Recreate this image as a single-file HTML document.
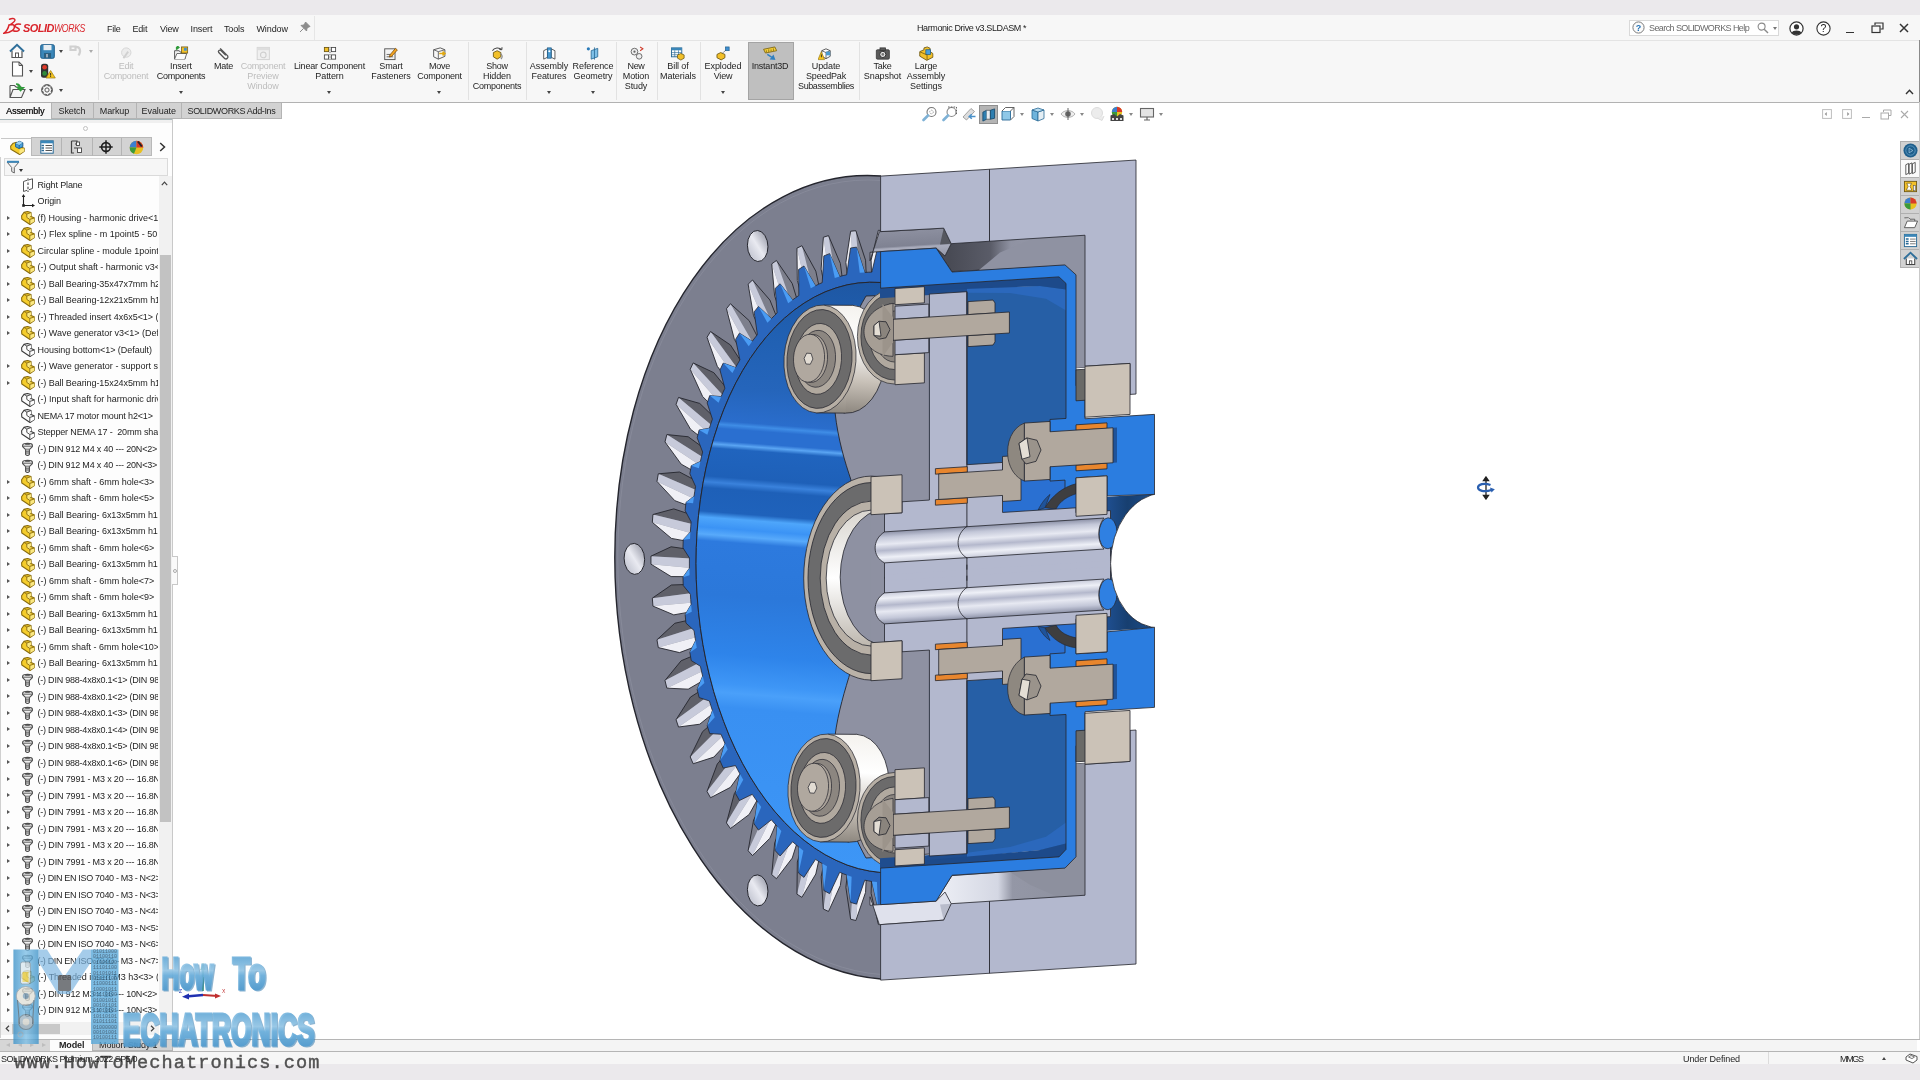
<!DOCTYPE html>
<html lang="en"><head><meta charset="utf-8"><title>Harmonic Drive v3.SLDASM - SOLIDWORKS</title>
<style>
html,body{margin:0;padding:0;width:1920px;height:1080px;overflow:hidden;background:#fff;}
body{font-family:"Liberation Sans",sans-serif;font-size:9px;color:#1e1e1e;position:relative}
.a{position:absolute}
.t{position:absolute;white-space:nowrap;line-height:11px}
.rb{position:absolute;top:46px;text-align:center;white-space:nowrap;line-height:9.9px;transform:translateX(-50%)}
.rb svg{display:block;margin:0 auto 1px auto}
.dis{color:#bdbdbd}
.dd{position:absolute;width:0;height:0;border-left:2.5px solid transparent;border-right:2.5px solid transparent;border-top:3px solid #444}
.sep{position:absolute;top:42px;height:58px;width:1px;background:#e2e2e2}
.tab{position:absolute;top:103px;height:15.5px;line-height:16.5px;text-align:center;background:#d2d2d2;border:1px solid #b4b4b4;border-top:none;box-sizing:border-box;font-size:9px}
.row{position:absolute;left:0;height:16px;width:158px;overflow:hidden;white-space:nowrap}
.row .tx{position:absolute;left:37.5px;top:3.3px;line-height:11px;white-space:pre}
.row svg{position:absolute;left:20.5px;top:1.5px}
.row i{position:absolute;left:7px;top:6.2px;width:0;height:0;border-top:2.5px solid transparent;border-bottom:2.5px solid transparent;border-left:3.5px solid #555}
</style></head>
<body>
<div id="app" style="position:absolute;left:0;top:0;width:1920px;height:1080px;overflow:hidden;will-change:transform">
<div class="a" style="left:0;top:0;width:1920px;height:15px;background:#ebe9ec"></div>
<div class="a" style="left:0;top:15px;width:1920px;height:87px;background:#f7f7f7"></div>
<div class="a" style="left:0;top:40px;width:1920px;height:1px;background:#e4e4e4"></div>
<div class="a" style="left:0;top:101.5px;width:1920px;height:1.3px;background:#b2b2b2"></div>
<div class="a" style="left:1918.6px;top:40px;width:1.2px;height:62px;background:#8a8a8a"></div>
<svg class="a" style="left:3px;top:17px" width="84" height="20" viewBox="0 0 84 20">
<path d="M6.5 2.2 C9 1.2 11.8 1.3 12 3 C12.2 4.6 9.5 6 8 7.2 M1 16.2 C3.5 14.5 5.2 11.5 6 8 L8.8 7.6 C12 7.6 12.3 11 9.5 13.4 C7 15.4 3.5 16.2 1 16.2 Z M17.5 7.2 C14.5 6.6 11.8 7.4 12 9 C12.3 10.8 16.3 10.8 16.3 12.6 C16.3 14.4 12.5 14.6 10.3 13.8" fill="none" stroke="#d9242b" stroke-width="1.5" stroke-linecap="round"/>
<text x="20" y="15" font-family="Liberation Sans,sans-serif" font-weight="bold" font-style="italic" font-size="11.5" fill="#d9242b" letter-spacing="-0.5" textLength="31" lengthAdjust="spacingAndGlyphs">SOLID</text>
<text x="51" y="15" font-family="Liberation Sans,sans-serif" font-style="italic" font-size="11.5" fill="#d9242b" letter-spacing="-0.5" textLength="31" lengthAdjust="spacingAndGlyphs">WORKS</text>
</svg>
<div class="t" style="left:107px;top:23.5px"><span style="letter-spacing:-0.21px">File</span></div>
<div class="t" style="left:132.5px;top:23.5px"><span style="letter-spacing:-0.21px">Edit</span></div>
<div class="t" style="left:160px;top:23.5px"><span style="letter-spacing:-0.21px">View</span></div>
<div class="t" style="left:190.5px;top:23.5px"><span style="letter-spacing:-0.12px">Insert</span></div>
<div class="t" style="left:224px;top:23.5px"><span style="letter-spacing:-0.15px">Tools</span></div>
<div class="t" style="left:256.5px;top:23.5px"><span style="letter-spacing:-0.12px">Window</span></div>
<svg class="a" style="left:299px;top:21px" width="12" height="12" viewBox="0 0 12 12"><path d="M6.5 1 L11 5.5 L9.5 6 L7.8 7.8 L7.6 10 L2 4.4 L4.2 4.2 L6 2.5 Z M4.6 7.4 L1 11" fill="#8c8c8c" stroke="#8c8c8c" stroke-width="1"/></svg>
<div class="a" style="left:314px;top:16px;width:1px;height:24px;background:#e6e6e6"></div>
<div class="t" style="left:917px;top:23px;font-size:9px;color:#222"><span style="letter-spacing:-0.40px">Harmonic Drive v3.SLDASM *</span></div>
<div class="a" style="left:1629px;top:19.5px;width:150px;height:16px;background:#fff;border:1px solid #d9d9d9;box-sizing:border-box"></div>
<svg class="a" style="left:1632px;top:21px" width="13" height="13" viewBox="0 0 13 13"><circle cx="6.5" cy="6.5" r="5.6" fill="#fafafa" stroke="#7a7a7a" stroke-width="1"/><text x="6.5" y="9.7" text-anchor="middle" font-family="Liberation Sans,sans-serif" font-weight="bold" font-size="9" fill="#1f6fb5">?</text></svg>
<div class="t" style="left:1649px;top:23px;font-size:9px;color:#6a6a6a"><span style="letter-spacing:-0.59px">Search SOLIDWORKS Help</span></div>
<svg class="a" style="left:1757px;top:22px" width="12" height="12" viewBox="0 0 12 12"><circle cx="4.6" cy="4.6" r="3.5" fill="none" stroke="#8a8a8a" stroke-width="1.1"/><path d="M7.2 7.2 L11 11" stroke="#8a8a8a" stroke-width="1.4"/></svg>
<div class="dd" style="left:1772.5px;top:27px;border-top-color:#777"></div>
<svg class="a" style="left:1788.5px;top:20.5px" width="15" height="15" viewBox="0 0 15 15"><circle cx="7.5" cy="7.5" r="6.6" fill="#fff" stroke="#333" stroke-width="1.2"/><circle cx="7.5" cy="5.8" r="2.6" fill="#333"/><path d="M2.8 11.8 C3.5 8.6 11.5 8.6 12.2 11.8 C10 14.3 5 14.3 2.8 11.8Z" fill="#333"/></svg>
<svg class="a" style="left:1815.5px;top:20.5px" width="15" height="15" viewBox="0 0 15 15"><circle cx="7.5" cy="7.5" r="6.6" fill="#fff" stroke="#333" stroke-width="1.1"/><text x="7.5" y="11.2" text-anchor="middle" font-family="Liberation Sans,sans-serif" font-size="10.5" fill="#222">?</text></svg>
<div class="a" style="left:1846px;top:31.5px;width:8px;height:1.6px;background:#333"></div>
<svg class="a" style="left:1871px;top:22px" width="13" height="12" viewBox="0 0 13 12"><path d="M4 3 V1 H12 V7 H9.5" fill="none" stroke="#333" stroke-width="1.2"/><rect x="1" y="4" width="8" height="6.5" fill="none" stroke="#333" stroke-width="1.2"/></svg>
<svg class="a" style="left:1899px;top:23px" width="10" height="10" viewBox="0 0 10 10"><path d="M1 1 L9 9 M9 1 L1 9" stroke="#333" stroke-width="1.5"/></svg>
<svg class="a" style="left:9px;top:43px" width="16" height="16" viewBox="0 0 16 16"><path d="M3 8 V14.5 H13 V8" fill="#fff" stroke="#555" stroke-width="1.2"/><path d="M1 8.5 L8 1.8 L15 8.5" fill="none" stroke="#2f6f9a" stroke-width="2"/><rect x="6.5" y="10" width="3" height="4.5" fill="none" stroke="#555" stroke-width="1"/></svg>
<svg class="a" style="left:39.5px;top:44px" width="15" height="15" viewBox="0 0 15 15"><rect x="0.7" y="0.7" width="13.6" height="13.6" rx="1.5" fill="#3a86b8" stroke="#1f5e8c" stroke-width="1"/><rect x="3.5" y="1" width="8" height="5.2" fill="#e8eef2"/><rect x="4" y="9" width="7" height="5" fill="#2c5f80"/><rect x="6" y="10" width="2" height="3.4" fill="#9ab"/></svg>
<div class="dd" style="left:59.0px;top:50px;border-top-color:#444"></div>
<svg class="a" style="left:69px;top:44px" width="14" height="13" viewBox="0 0 14 13"><path d="M1.5 2.5 H6.5 V6 H1.5 Z M6 3 C11 2 12.5 7 9.5 11.5" fill="none" stroke="#d0d0d0" stroke-width="2.2"/></svg>
<div class="dd" style="left:89.0px;top:50px;border-top-color:#aaa"></div>
<svg class="a" style="left:11px;top:61px" width="13" height="16" viewBox="0 0 13 16"><path d="M1.5 1 H8 L11.5 4.5 V15 H1.5 Z" fill="#fff" stroke="#555" stroke-width="1.1"/><path d="M8 1 V4.5 H11.5" fill="none" stroke="#555" stroke-width="1"/></svg>
<div class="dd" style="left:29.0px;top:69.5px;border-top-color:#444"></div>
<svg class="a" style="left:40px;top:63px" width="16" height="16" viewBox="0 0 16 16"><rect x="1" y="0.8" width="7.2" height="14" rx="2.5" fill="#333"/><circle cx="4.6" cy="4.3" r="2.3" fill="#e03a2a"/><circle cx="4.6" cy="10.4" r="2.3" fill="#2f8a3a"/><path d="M10.6 7.5 L15.3 15 H6 Z" fill="#f6c51f" stroke="#9a7a10" stroke-width="0.7"/><rect x="10.2" y="10" width="0.9" height="2.6" fill="#222"/><rect x="10.2" y="13.1" width="0.9" height="0.9" fill="#222"/></svg>
<svg class="a" style="left:9px;top:83px" width="17" height="16" viewBox="0 0 17 16"><path d="M1 2.5 H5.5 L7 4 H12 V6" fill="#fff" stroke="#555" stroke-width="1.1"/><path d="M1 2.5 V14.5 H12.5 L16 6.5 H4 L1 14.5" fill="#f4f4f4" stroke="#555" stroke-width="1.1"/><path d="M7 1 C10 1 11.5 3 11.5 6 M11.5 7.5 L8.8 4.8 H14.2 Z" fill="#2f9a3a" stroke="#2f9a3a" stroke-width="1.6"/></svg>
<div class="dd" style="left:29.0px;top:89px;border-top-color:#444"></div>
<svg class="a" style="left:40px;top:83px" width="14" height="14" viewBox="0 0 14 14"><circle cx="7" cy="7" r="4.6" fill="none" stroke="#555" stroke-width="1.1" stroke-dasharray="2.4 1.2"/><circle cx="7" cy="7" r="5.4" fill="none" stroke="#555" stroke-width="1"/><circle cx="7" cy="7" r="2.1" fill="none" stroke="#555" stroke-width="1"/></svg>
<div class="dd" style="left:59.0px;top:89px;border-top-color:#444"></div>
<div class="a" style="left:98px;top:42px;width:1px;height:58px;background:#e0e0e0"></div>
<div class="a" style="left:747.5px;top:42px;width:46px;height:58px;background:#bfbfbf;border:1px solid #a4a4a4;box-sizing:border-box"></div>
<div class="rb dis" style="left:126px"><svg width="15" height="15" viewBox="0 0 16 16"><circle cx="8" cy="7" r="5" fill="#ececec" stroke="#d4d4d4"/><path d="M5 13 L10 6" stroke="#d0d0d0" stroke-width="2"/></svg><span style="letter-spacing:-0.21px">Edit</span><br><span style="letter-spacing:-0.23px">Component</span></div>
<div class="rb" style="left:181px"><svg width="15" height="15" viewBox="0 0 16 16"><path d="M1 5 H6 L7 6.5 H12 V14 H1 Z" fill="#f1f1f1" stroke="#555" stroke-width="1"/><path d="M1 14 L3.5 8 H14 L12 14" fill="#fafafa" stroke="#555" stroke-width="0.9"/><rect x="8.5" y="1" width="6.5" height="6.5" fill="#f2c029" stroke="#6b5510" stroke-width="0.8"/><rect x="11" y="2" width="3" height="3" fill="#3f8fd0"/><path d="M3 4 V1.5 H5.5 M5.8 1.5 L4 0 V3 Z" fill="#2f9a3a" stroke="#2f9a3a" stroke-width="1.2"/></svg><span style="letter-spacing:-0.12px">Insert</span><br><span style="letter-spacing:-0.23px">Components</span></div>
<div class="dd" style="left:178.5px;top:91px;border-top-color:#444"></div>
<div class="rb" style="left:223.5px"><svg width="15" height="15" viewBox="0 0 16 16"><path d="M4 2.5 L12 10.5 A2.2 2.2 0 0 1 9 13.5 L2.5 7 A1.6 1.6 0 0 1 4.8 4.8 L10 10" fill="none" stroke="#555" stroke-width="1.4"/></svg><span style="letter-spacing:-0.21px">Mate</span></div>
<div class="rb dis" style="left:263px"><svg width="15" height="15" viewBox="0 0 16 16"><rect x="1.5" y="1.5" width="13" height="13" fill="#f0f0f0" stroke="#d2d2d2"/><rect x="1.5" y="1.5" width="13" height="3" fill="#dedede"/><circle cx="8" cy="9.5" r="3" fill="none" stroke="#d0d0d0" stroke-width="1.2"/></svg><span style="letter-spacing:-0.23px">Component</span><br><span style="letter-spacing:-0.10px">Preview</span><br><span style="letter-spacing:-0.12px">Window</span></div>
<div class="rb" style="left:329.5px"><svg width="15" height="15" viewBox="0 0 16 16"><rect x="2" y="1.5" width="4.5" height="4.5" fill="#f2c029" stroke="#6b5510" stroke-width="0.9"/><rect x="9.5" y="1.5" width="4.5" height="4.5" fill="#fff" stroke="#444" stroke-width="0.9"/><rect x="2" y="9.5" width="4.5" height="4.5" fill="#fff" stroke="#444" stroke-width="0.9"/><rect x="9.5" y="9.5" width="4.5" height="4.5" fill="#fff" stroke="#444" stroke-width="0.9"/><path d="M8 1 V15" stroke="#444" stroke-width="0.8" stroke-dasharray="1.5 1"/></svg><span style="letter-spacing:-0.19px">Linear Component</span><br><span style="letter-spacing:-0.10px">Pattern</span></div>
<div class="dd" style="left:327.0px;top:91px;border-top-color:#444"></div>
<div class="rb" style="left:391px"><svg width="15" height="15" viewBox="0 0 16 16"><rect x="1.5" y="3" width="11" height="11.5" fill="#f4f4f4" stroke="#555" stroke-width="1"/><path d="M3.5 11.5 H10.5 M3.5 9 H8" stroke="#555" stroke-width="0.9"/><path d="M7 9.5 L13 2.5 L15 4.2 L9 11 L6.5 11.8 Z" fill="#f5a623" stroke="#7a4a08" stroke-width="0.8"/></svg><span style="letter-spacing:-0.15px">Smart</span><br><span style="letter-spacing:-0.07px">Fasteners</span></div>
<div class="rb" style="left:439.5px"><svg width="15" height="15" viewBox="0 0 16 16"><path d="M2 4 L9 2 L14 4 V11 L7 14 L2 11.5 Z" fill="#f8f8f8" stroke="#555" stroke-width="1"/><path d="M2 4 L7 6 L14 4 M7 6 V14" fill="none" stroke="#555" stroke-width="0.9"/><path d="M8 8 H13 M11.5 6 L14 8 L11.5 10" fill="none" stroke="#e0a810" stroke-width="1.6"/></svg><span style="letter-spacing:-0.21px">Move</span><br><span style="letter-spacing:-0.23px">Component</span></div>
<div class="dd" style="left:437.0px;top:91px;border-top-color:#444"></div>
<div class="rb" style="left:497px"><svg width="15" height="15" viewBox="0 0 16 16"><path d="M4 7 L8 5 L12 7 V11.5 L8 14 L4 11.5 Z" fill="#f2c029" stroke="#6b5510" stroke-width="0.9"/><path d="M3 5 A6 5 0 0 1 13 4 M13 4 L13.2 1.4 M13 4 L10.4 3.6" fill="none" stroke="#444" stroke-width="1.1"/><path d="M11 8 C14 9 14 12 12 14" fill="none" stroke="#888" stroke-width="1.2"/></svg><span style="letter-spacing:-0.21px">Show</span><br><span style="letter-spacing:-0.12px">Hidden</span><br><span style="letter-spacing:-0.23px">Components</span></div>
<div class="rb" style="left:549px"><svg width="15" height="15" viewBox="0 0 16 16"><path d="M2 5 L6 3 V12 L2 14 Z M10 3 L14 5 V14 L10 12 Z" fill="#fff" stroke="#444" stroke-width="0.9"/><rect x="6" y="2" width="4" height="11" fill="#4a9ad0" stroke="#1f5e8c" stroke-width="0.8"/><circle cx="8" cy="5.5" r="1.1" fill="#fff"/></svg><span style="letter-spacing:-0.08px">Assembly</span><br><span style="letter-spacing:-0.08px">Features</span></div>
<div class="dd" style="left:546.5px;top:91px;border-top-color:#444"></div>
<div class="rb" style="left:593px"><svg width="15" height="15" viewBox="0 0 16 16"><path d="M6 5 L13 2.5 V11.5 L6 14 Z" fill="#7fc0e8" stroke="#2a6a96" stroke-width="0.9"/><path d="M9.5 1.5 V14.5" stroke="#2a6a96" stroke-width="0.9"/><circle cx="3" cy="3" r="1.7" fill="#2a7ab8"/></svg><span style="letter-spacing:-0.07px">Reference</span><br><span style="letter-spacing:-0.08px">Geometry</span></div>
<div class="dd" style="left:590.5px;top:91px;border-top-color:#444"></div>
<div class="rb" style="left:636px"><svg width="15" height="15" viewBox="0 0 16 16"><circle cx="6" cy="6" r="3.6" fill="#eee" stroke="#666" stroke-width="1"/><circle cx="6" cy="6" r="1.2" fill="#666"/><circle cx="11" cy="11" r="3" fill="#eee" stroke="#666" stroke-width="1"/><path d="M12 1 L15 3 L12 5" fill="none" stroke="#d04030" stroke-width="1.2"/></svg><span style="letter-spacing:-0.30px">New</span><br><span style="letter-spacing:-0.12px">Motion</span><br><span style="letter-spacing:-0.15px">Study</span></div>
<div class="rb" style="left:678px"><svg width="15" height="15" viewBox="0 0 16 16"><rect x="1.5" y="2" width="11" height="9.5" fill="#fff" stroke="#2a6a96" stroke-width="1"/><rect x="1.5" y="2" width="11" height="2.6" fill="#3a86b8"/><path d="M1.5 7 H12.5 M1.5 9.3 H12.5 M5 4.6 V11.5 M9 4.6 V11.5" stroke="#2a6a96" stroke-width="0.7"/><path d="M8 9.5 L11.5 8 L15 9.5 V13 L11.5 15 L8 13 Z" fill="#f2c029" stroke="#6b5510" stroke-width="0.8"/></svg><span style="letter-spacing:-0.10px">Bill of</span><br><span style="letter-spacing:-0.07px">Materials</span></div>
<div class="rb" style="left:723px"><svg width="15" height="15" viewBox="0 0 16 16"><path d="M1.5 9 L5.5 7 L10 9 V12.5 L6 14.8 L1.5 12.5 Z" fill="#f2c029" stroke="#6b5510" stroke-width="0.9"/><rect x="10.5" y="1" width="4" height="4" fill="#3f8fd0" stroke="#1f5e8c" stroke-width="0.7"/><path d="M7.5 7.5 L11 4.5" stroke="#444" stroke-width="0.9" stroke-dasharray="1.4 1"/></svg><span style="letter-spacing:-0.08px">Exploded</span><br><span style="letter-spacing:-0.21px">View</span></div>
<div class="dd" style="left:720.5px;top:91px;border-top-color:#444"></div>
<div class="rb" style="left:770px"><svg width="15" height="15" viewBox="0 0 16 16"><path d="M1 3.5 L13 1 L15 5 L3 7.5 Z" fill="#f5cf3a" stroke="#7a6310" stroke-width="0.9"/><path d="M4 6.8 V4.6 M6.5 6.3 V3.6 M9 5.8 V3.6 M11.5 5.3 V2.6" stroke="#7a6310" stroke-width="0.8"/><path d="M5 9 L12 13.5 M12.5 14 L9 13.8 L11.3 10.8 Z" fill="#2f7fc0" stroke="#2f7fc0" stroke-width="1.6"/></svg><span style="letter-spacing:-0.20px">Instant3D</span></div>
<div class="rb" style="left:826px"><svg width="15" height="15" viewBox="0 0 16 16"><path d="M4 5 L8.5 3 L13 5 V11 L8.5 13.5 L4 11 Z" fill="#fff" stroke="#444" stroke-width="0.9"/><path d="M4 5 L8.5 7 L13 5 M8.5 7 V13.5" fill="none" stroke="#444" stroke-width="0.8"/><rect x="8.5" y="6" width="4.5" height="4" fill="#4a9ad0"/><path d="M3.5 6 L7 14.5 H0 Z" fill="#f6c51f" stroke="#9a7a10" stroke-width="0.7"/><rect x="3.1" y="9" width="0.9" height="3" fill="#222"/></svg><span style="letter-spacing:-0.12px">Update</span><br><span style="letter-spacing:-0.21px">SpeedPak</span><br><span style="letter-spacing:-0.39px">Subassemblies</span></div>
<div class="rb" style="left:882.5px"><svg width="15" height="15" viewBox="0 0 16 16"><rect x="1" y="4" width="14" height="10" rx="1.2" fill="#5a5a5a" stroke="#333" stroke-width="0.8"/><rect x="5" y="2" width="6" height="2.6" fill="#5a5a5a" stroke="#333" stroke-width="0.8"/><circle cx="8" cy="9" r="3.3" fill="#e8e8e8" stroke="#222" stroke-width="1"/><circle cx="8" cy="9" r="1.5" fill="#777"/></svg><span style="letter-spacing:-0.21px">Take</span><br><span style="letter-spacing:-0.08px">Snapshot</span></div>
<div class="rb" style="left:926px"><svg width="15" height="15" viewBox="0 0 16 16"><path d="M1 6 L5.5 4 L5.5 2 L9 1 L12 2.4 V6 L15 8 V12 L8.5 15.3 L1 10.8 Z" fill="#f2c029" stroke="#6b5510" stroke-width="0.9"/><rect x="7.5" y="4" width="5" height="5" fill="#4aa0dc" stroke="#1f5e8c" stroke-width="0.8"/><path d="M1.3 6.3 L8.8 9.5 V15" fill="none" stroke="#6b5510" stroke-width="0.8"/></svg><span style="letter-spacing:-0.15px">Large</span><br><span style="letter-spacing:-0.08px">Assembly</span><br><span style="letter-spacing:-0.08px">Settings</span></div>
<div class="sep" style="left:467.5px"></div>
<div class="sep" style="left:526px"></div>
<div class="sep" style="left:616px"></div>
<div class="sep" style="left:656.5px"></div>
<div class="sep" style="left:700px"></div>
<div class="sep" style="left:859px"></div>
<svg class="a" style="left:1904.5px;top:89px" width="9" height="6" viewBox="0 0 9 6"><path d="M1 5 L4.5 1.3 L8 5" fill="none" stroke="#333" stroke-width="1.4"/></svg>
<div class="a" style="left:0;top:103px;width:51px;height:16px;background:#f7f7f7"></div>
<div class="t" style="left:6px;top:105.8px;font-size:9px;text-shadow:0.3px 0 0 #222"><span style="letter-spacing:-0.08px">Assembly</span></div>
<div class="tab" style="left:50.5px;width:43px"><span style="letter-spacing:-0.12px">Sketch</span></div>
<div class="tab" style="left:92.5px;width:44px"><span style="letter-spacing:-0.12px">Markup</span></div>
<div class="tab" style="left:135.5px;width:46.5px"><span style="letter-spacing:-0.08px">Evaluate</span></div>
<div class="tab" style="left:181px;width:101px"><span style="letter-spacing:-0.34px">SOLIDWORKS Add-Ins</span></div>
<div class="a" style="left:0;top:118.5px;width:172px;height:1.2px;background:#a9b7ba"></div>
<div class="a" style="left:0;top:119.5px;width:172px;height:919px;background:#fdfdfd"></div>
<div class="a" style="left:0;top:119.5px;width:172px;height:3px;background:#f0f0f0"></div>
<div class="a" style="left:171.5px;top:119px;width:1.2px;height:920px;background:#c9c9c9"></div>
<div class="a" style="left:0;top:157px;width:1.2px;height:881px;background:#d0d0d0"></div>
<div class="a" style="left:82.5px;top:126px;width:3px;height:3px;border:1px solid #c0c0c0;border-radius:50%"></div>
<div class="a" style="left:31px;top:137px;width:121px;height:19px;background:#d3d3d3;border:1px solid #b9b9b9;box-sizing:border-box"></div>
<div class="a" style="left:61px;top:138px;width:1px;height:18px;background:#b4b4b4"></div>
<div class="a" style="left:91.5px;top:138px;width:1px;height:18px;background:#b4b4b4"></div>
<div class="a" style="left:121px;top:138px;width:1px;height:18px;background:#b4b4b4"></div>
<div class="a" style="left:1px;top:137.5px;width:30px;height:1px;background:#c8c8c8"></div>
<svg class="a" style="left:9.5px;top:139.5px" width="15" height="15" viewBox="0 0 14 14"><path d="M0.6,5.8 L3,3 L6,2.2 L6,5 L13.3,7.6 L13.3,10.6 L9,13.5 L0.8,8.6 Z" fill="#f5cd2c" stroke="#8a6d10" stroke-width="1" stroke-linejoin="round"/><path d="M8.8,9 L13.3,7.6 L13.3,10.6 L8.8,13.3 Z" fill="#fbe880"/><path d="M5.2,3.2 L8.6,1.2 L12,2.6 L12,6.2 L8.6,8 L5.2,6.4 Z" fill="#4aa3de" stroke="#1f5e8c" stroke-width="0.9" stroke-linejoin="round"/><path d="M5.2,3.2 L8.6,4.6 L12,2.6 M8.6,4.6 V8" fill="none" stroke="#1f5e8c" stroke-width="0.8"/><path d="M5.2,3.2 L8.6,1.2 L12,2.6 L8.6,4.6 Z" fill="#9fd4f2"/></svg>
<svg class="a" style="left:39.5px;top:140px" width="14" height="14" viewBox="0 0 14 14"><rect x="0.8" y="0.8" width="12.4" height="12.4" fill="#fff" stroke="#2a6a96" stroke-width="1"/><rect x="0.8" y="0.8" width="12.4" height="2.5" fill="#3a86b8"/><path d="M1.5 5.5 H4 M1.5 8 H4 M1.5 10.5 H4" stroke="#2a6a96" stroke-width="1.6"/><path d="M5.5 5.5 H12 M5.5 8 H12 M5.5 10.5 H12" stroke="#555" stroke-width="1"/></svg>
<svg class="a" style="left:70px;top:140px" width="13" height="14" viewBox="0 0 13 14"><path d="M1.5 1 V13 H4 M1.5 1 H7 V4 H5 M4 8 H7" fill="none" stroke="#444" stroke-width="1.2"/><rect x="6.5" y="2" width="3" height="3.5" fill="#fff" stroke="#444" stroke-width="0.9"/><rect x="7.5" y="8" width="4" height="4.5" fill="#fff" stroke="#444" stroke-width="0.9"/></svg>
<svg class="a" style="left:99px;top:140px" width="14" height="14" viewBox="0 0 14 14"><circle cx="7" cy="7" r="4.4" fill="none" stroke="#1e1e1e" stroke-width="1.6"/><path d="M7 0.3 V13.7 M0.3 7 H13.7" stroke="#1e1e1e" stroke-width="1.5"/></svg>
<svg class="a" style="left:129px;top:139.5px" width="15" height="15" viewBox="0 0 15 15"><circle cx="7.5" cy="7.5" r="6.8" fill="#e8c020"/><path d="M7.5 7.5 L7.5 0.7 A6.8 6.8 0 0 0 0.7 7.5 Z" fill="#3a7fd0"/><path d="M7.5 7.5 L0.7 7.5 A6.8 6.8 0 0 0 5 13.8 Z" fill="#3a9a3a"/><path d="M7.5 7.5 L7.5 0.7 A6.8 6.8 0 0 1 14.3 7.5 Z" fill="#d83a2a"/><path d="M9 1.5 L12.8 6.5" stroke="#222" stroke-width="2"/></svg>
<svg class="a" style="left:158.5px;top:141.5px" width="7" height="10" viewBox="0 0 7 10"><path d="M1.2 1 L5.5 5 L1.2 9" fill="none" stroke="#333" stroke-width="1.5"/></svg>
<div class="a" style="left:4px;top:157.5px;width:164px;height:18.5px;background:#f6f6f6;border:1px solid #dadada;box-sizing:border-box"></div>
<svg class="a" style="left:5.5px;top:160px" width="14" height="14" viewBox="0 0 14 14"><path d="M1 2 H13 L8.3 7.5 V13 L5.7 11.5 V7.5 Z" fill="#f2f2f2" stroke="#666" stroke-width="1"/><path d="M1 1.8 H13" stroke="#3a86b8" stroke-width="2"/></svg>
<div class="dd" style="left:18.8px;top:168.5px;border-top-color:#333"></div>
<div class="row" style="top:176.40px"><svg width="14" height="14" viewBox="0 0 14 14" style=""><path d="M2.5 3.5 L6 2.3 M8 1.8 L11.5 0.8 L11.5 10.5 L8 11.7 M6 12.3 L2.5 13.5 L2.5 3.5" fill="none" stroke="#555" stroke-width="1"/><path d="M7 0.3 V2.8 M7 4.5 V7 M7 8.7 V11.2 M7 12.5 V14" stroke="#333" stroke-width="1"/></svg><span class="tx" style="letter-spacing:-0.14px">Right Plane</span></div>
<div class="row" style="top:192.91px"><svg width="14" height="14" viewBox="0 0 14 14" style=""><path d="M2.5 1 V11.5 H13" fill="none" stroke="#222" stroke-width="1.1"/><path d="M2.5 0 L0.8 3 H4.2 Z M14 11.5 L11 9.8 V13.2 Z" fill="#222"/><rect x="1.2" y="10.2" width="2.6" height="2.6" fill="#222"/></svg><span class="tx" style="letter-spacing:-0.12px">Origin</span></div>
<div class="row" style="top:209.42px"><i></i><svg width="14" height="14" viewBox="0 0 14 14" style=""><path d="M0.6,4.8 L3,1.4 L6.5,0.5 L10,1.6 L10.2,5.4 L13.3,7 L13.3,10.5 L9,13.5 L0.8,8 Z" fill="#f5cd2c" stroke="#8a6d10" stroke-width="1.1" stroke-linejoin="round"/><path d="M5.8,3 L10,1.6 L10.2,5.4 L8.8,8.4 L5.8,6.4 Z M8.8,8.4 L13.3,7 L13.3,10.5 L8.8,13.3 Z" fill="#fbe880"/><path d="M3,1.4 L5.8,3 L10,1.6 M5.8,3 L5.8,6.4 L8.8,8.4 L8.8,13.3 M8.8,8.4 L13.3,7 M10.2,5.4 L8.8,6" fill="none" stroke="#8a6d10" stroke-width="0.9" stroke-linejoin="round"/></svg><span class="tx" style="letter-spacing:-0.02px">(f) Housing - harmonic drive&lt;1&gt; (Default</span></div>
<div class="row" style="top:225.93px"><i></i><svg width="14" height="14" viewBox="0 0 14 14" style=""><path d="M0.6,4.8 L3,1.4 L6.5,0.5 L10,1.6 L10.2,5.4 L13.3,7 L13.3,10.5 L9,13.5 L0.8,8 Z" fill="#f5cd2c" stroke="#8a6d10" stroke-width="1.1" stroke-linejoin="round"/><path d="M5.8,3 L10,1.6 L10.2,5.4 L8.8,8.4 L5.8,6.4 Z M8.8,8.4 L13.3,7 L13.3,10.5 L8.8,13.3 Z" fill="#fbe880"/><path d="M3,1.4 L5.8,3 L10,1.6 M5.8,3 L5.8,6.4 L8.8,8.4 L8.8,13.3 M8.8,8.4 L13.3,7 M10.2,5.4 L8.8,6" fill="none" stroke="#8a6d10" stroke-width="0.9" stroke-linejoin="round"/></svg><span class="tx" style="letter-spacing:-0.01px">(-) Flex spline - m 1point5 - 50 teeth</span></div>
<div class="row" style="top:242.44px"><i></i><svg width="14" height="14" viewBox="0 0 14 14" style=""><path d="M0.6,4.8 L3,1.4 L6.5,0.5 L10,1.6 L10.2,5.4 L13.3,7 L13.3,10.5 L9,13.5 L0.8,8 Z" fill="#f5cd2c" stroke="#8a6d10" stroke-width="1.1" stroke-linejoin="round"/><path d="M5.8,3 L10,1.6 L10.2,5.4 L8.8,8.4 L5.8,6.4 Z M8.8,8.4 L13.3,7 L13.3,10.5 L8.8,13.3 Z" fill="#fbe880"/><path d="M3,1.4 L5.8,3 L10,1.6 M5.8,3 L5.8,6.4 L8.8,8.4 L8.8,13.3 M8.8,8.4 L13.3,7 M10.2,5.4 L8.8,6" fill="none" stroke="#8a6d10" stroke-width="0.9" stroke-linejoin="round"/></svg><span class="tx" style="letter-spacing:-0.01px">Circular spline - module 1point5</span></div>
<div class="row" style="top:258.95px"><i></i><svg width="14" height="14" viewBox="0 0 14 14" style=""><path d="M0.6,4.8 L3,1.4 L6.5,0.5 L10,1.6 L10.2,5.4 L13.3,7 L13.3,10.5 L9,13.5 L0.8,8 Z" fill="#f5cd2c" stroke="#8a6d10" stroke-width="1.1" stroke-linejoin="round"/><path d="M5.8,3 L10,1.6 L10.2,5.4 L8.8,8.4 L5.8,6.4 Z M8.8,8.4 L13.3,7 L13.3,10.5 L8.8,13.3 Z" fill="#fbe880"/><path d="M3,1.4 L5.8,3 L10,1.6 M5.8,3 L5.8,6.4 L8.8,8.4 L8.8,13.3 M8.8,8.4 L13.3,7 M10.2,5.4 L8.8,6" fill="none" stroke="#8a6d10" stroke-width="0.9" stroke-linejoin="round"/></svg><span class="tx" style="letter-spacing:-0.01px">(-) Output shaft - harmonic v3&lt;1&gt;</span></div>
<div class="row" style="top:275.46px"><i></i><svg width="14" height="14" viewBox="0 0 14 14" style=""><path d="M0.6,4.8 L3,1.4 L6.5,0.5 L10,1.6 L10.2,5.4 L13.3,7 L13.3,10.5 L9,13.5 L0.8,8 Z" fill="#f5cd2c" stroke="#8a6d10" stroke-width="1.1" stroke-linejoin="round"/><path d="M5.8,3 L10,1.6 L10.2,5.4 L8.8,8.4 L5.8,6.4 Z M8.8,8.4 L13.3,7 L13.3,10.5 L8.8,13.3 Z" fill="#fbe880"/><path d="M3,1.4 L5.8,3 L10,1.6 M5.8,3 L5.8,6.4 L8.8,8.4 L8.8,13.3 M8.8,8.4 L13.3,7 M10.2,5.4 L8.8,6" fill="none" stroke="#8a6d10" stroke-width="0.9" stroke-linejoin="round"/></svg><span class="tx" style="letter-spacing:-0.07px">(-) Ball Bearing-35x47x7mm h2&lt;1&gt;</span></div>
<div class="row" style="top:291.97px"><i></i><svg width="14" height="14" viewBox="0 0 14 14" style=""><path d="M0.6,4.8 L3,1.4 L6.5,0.5 L10,1.6 L10.2,5.4 L13.3,7 L13.3,10.5 L9,13.5 L0.8,8 Z" fill="#f5cd2c" stroke="#8a6d10" stroke-width="1.1" stroke-linejoin="round"/><path d="M5.8,3 L10,1.6 L10.2,5.4 L8.8,8.4 L5.8,6.4 Z M8.8,8.4 L13.3,7 L13.3,10.5 L8.8,13.3 Z" fill="#fbe880"/><path d="M3,1.4 L5.8,3 L10,1.6 M5.8,3 L5.8,6.4 L8.8,8.4 L8.8,13.3 M8.8,8.4 L13.3,7 M10.2,5.4 L8.8,6" fill="none" stroke="#8a6d10" stroke-width="0.9" stroke-linejoin="round"/></svg><span class="tx" style="letter-spacing:-0.07px">(-) Ball Bearing-12x21x5mm h1&lt;1&gt;</span></div>
<div class="row" style="top:308.48px"><i></i><svg width="14" height="14" viewBox="0 0 14 14" style=""><path d="M0.6,4.8 L3,1.4 L6.5,0.5 L10,1.6 L10.2,5.4 L13.3,7 L13.3,10.5 L9,13.5 L0.8,8 Z" fill="#f5cd2c" stroke="#8a6d10" stroke-width="1.1" stroke-linejoin="round"/><path d="M5.8,3 L10,1.6 L10.2,5.4 L8.8,8.4 L5.8,6.4 Z M8.8,8.4 L13.3,7 L13.3,10.5 L8.8,13.3 Z" fill="#fbe880"/><path d="M3,1.4 L5.8,3 L10,1.6 M5.8,3 L5.8,6.4 L8.8,8.4 L8.8,13.3 M8.8,8.4 L13.3,7 M10.2,5.4 L8.8,6" fill="none" stroke="#8a6d10" stroke-width="0.9" stroke-linejoin="round"/></svg><span class="tx" style="letter-spacing:-0.03px">(-) Threaded insert 4x6x5&lt;1&gt; (Default)</span></div>
<div class="row" style="top:324.99px"><i></i><svg width="14" height="14" viewBox="0 0 14 14" style=""><path d="M0.6,4.8 L3,1.4 L6.5,0.5 L10,1.6 L10.2,5.4 L13.3,7 L13.3,10.5 L9,13.5 L0.8,8 Z" fill="#f5cd2c" stroke="#8a6d10" stroke-width="1.1" stroke-linejoin="round"/><path d="M5.8,3 L10,1.6 L10.2,5.4 L8.8,8.4 L5.8,6.4 Z M8.8,8.4 L13.3,7 L13.3,10.5 L8.8,13.3 Z" fill="#fbe880"/><path d="M3,1.4 L5.8,3 L10,1.6 M5.8,3 L5.8,6.4 L8.8,8.4 L8.8,13.3 M8.8,8.4 L13.3,7 M10.2,5.4 L8.8,6" fill="none" stroke="#8a6d10" stroke-width="0.9" stroke-linejoin="round"/></svg><span class="tx" style="letter-spacing:-0.03px">(-) Wave generator v3&lt;1&gt; (Default)</span></div>
<div class="row" style="top:341.50px"><svg width="14" height="14" viewBox="0 0 14 14" style=""><path d="M0.6,4.8 L3,1.4 L6.5,0.5 L10,1.6 L10.2,5.4 L13.3,7 L13.3,10.5 L9,13.5 L0.8,8 Z" fill="#fcfcfc" stroke="#3c3c3c" stroke-width="1.1" stroke-linejoin="round"/><path d="M5.8,3 L10,1.6 L10.2,5.4 L8.8,8.4 L5.8,6.4 Z M8.8,8.4 L13.3,7 L13.3,10.5 L8.8,13.3 Z" fill="#ffffff"/><path d="M3,1.4 L5.8,3 L10,1.6 M5.8,3 L5.8,6.4 L8.8,8.4 L8.8,13.3 M8.8,8.4 L13.3,7 M10.2,5.4 L8.8,6" fill="none" stroke="#3c3c3c" stroke-width="0.9" stroke-linejoin="round"/></svg><span class="tx" style="letter-spacing:-0.04px">Housing bottom&lt;1&gt; (Default)</span></div>
<div class="row" style="top:358.01px"><i></i><svg width="14" height="14" viewBox="0 0 14 14" style=""><path d="M0.6,4.8 L3,1.4 L6.5,0.5 L10,1.6 L10.2,5.4 L13.3,7 L13.3,10.5 L9,13.5 L0.8,8 Z" fill="#f5cd2c" stroke="#8a6d10" stroke-width="1.1" stroke-linejoin="round"/><path d="M5.8,3 L10,1.6 L10.2,5.4 L8.8,8.4 L5.8,6.4 Z M8.8,8.4 L13.3,7 L13.3,10.5 L8.8,13.3 Z" fill="#fbe880"/><path d="M3,1.4 L5.8,3 L10,1.6 M5.8,3 L5.8,6.4 L8.8,8.4 L8.8,13.3 M8.8,8.4 L13.3,7 M10.2,5.4 L8.8,6" fill="none" stroke="#8a6d10" stroke-width="0.9" stroke-linejoin="round"/></svg><span class="tx" style="letter-spacing:0.01px">(-) Wave generator - support sleeve</span></div>
<div class="row" style="top:374.52px"><i></i><svg width="14" height="14" viewBox="0 0 14 14" style=""><path d="M0.6,4.8 L3,1.4 L6.5,0.5 L10,1.6 L10.2,5.4 L13.3,7 L13.3,10.5 L9,13.5 L0.8,8 Z" fill="#f5cd2c" stroke="#8a6d10" stroke-width="1.1" stroke-linejoin="round"/><path d="M5.8,3 L10,1.6 L10.2,5.4 L8.8,8.4 L5.8,6.4 Z M8.8,8.4 L13.3,7 L13.3,10.5 L8.8,13.3 Z" fill="#fbe880"/><path d="M3,1.4 L5.8,3 L10,1.6 M5.8,3 L5.8,6.4 L8.8,8.4 L8.8,13.3 M8.8,8.4 L13.3,7 M10.2,5.4 L8.8,6" fill="none" stroke="#8a6d10" stroke-width="0.9" stroke-linejoin="round"/></svg><span class="tx" style="letter-spacing:-0.07px">(-) Ball Bearing-15x24x5mm h1&lt;1&gt;</span></div>
<div class="row" style="top:391.03px"><svg width="14" height="14" viewBox="0 0 14 14" style=""><path d="M0.6,4.8 L3,1.4 L6.5,0.5 L10,1.6 L10.2,5.4 L13.3,7 L13.3,10.5 L9,13.5 L0.8,8 Z" fill="#fcfcfc" stroke="#3c3c3c" stroke-width="1.1" stroke-linejoin="round"/><path d="M5.8,3 L10,1.6 L10.2,5.4 L8.8,8.4 L5.8,6.4 Z M8.8,8.4 L13.3,7 L13.3,10.5 L8.8,13.3 Z" fill="#ffffff"/><path d="M3,1.4 L5.8,3 L10,1.6 M5.8,3 L5.8,6.4 L8.8,8.4 L8.8,13.3 M8.8,8.4 L13.3,7 M10.2,5.4 L8.8,6" fill="none" stroke="#3c3c3c" stroke-width="0.9" stroke-linejoin="round"/></svg><span class="tx" style="letter-spacing:0.01px">(-) Input shaft for harmonic drive</span></div>
<div class="row" style="top:407.54px"><svg width="14" height="14" viewBox="0 0 14 14" style=""><path d="M0.6,4.8 L3,1.4 L6.5,0.5 L10,1.6 L10.2,5.4 L13.3,7 L13.3,10.5 L9,13.5 L0.8,8 Z" fill="#fcfcfc" stroke="#3c3c3c" stroke-width="1.1" stroke-linejoin="round"/><path d="M5.8,3 L10,1.6 L10.2,5.4 L8.8,8.4 L5.8,6.4 Z M8.8,8.4 L13.3,7 L13.3,10.5 L8.8,13.3 Z" fill="#ffffff"/><path d="M3,1.4 L5.8,3 L10,1.6 M5.8,3 L5.8,6.4 L8.8,8.4 L8.8,13.3 M8.8,8.4 L13.3,7 M10.2,5.4 L8.8,6" fill="none" stroke="#3c3c3c" stroke-width="0.9" stroke-linejoin="round"/></svg><span class="tx" style="letter-spacing:-0.15px">NEMA 17 motor mount h2&lt;1&gt;</span></div>
<div class="row" style="top:424.05px"><svg width="14" height="14" viewBox="0 0 14 14" style=""><path d="M0.6,4.8 L3,1.4 L6.5,0.5 L10,1.6 L10.2,5.4 L13.3,7 L13.3,10.5 L9,13.5 L0.8,8 Z" fill="#fcfcfc" stroke="#3c3c3c" stroke-width="1.1" stroke-linejoin="round"/><path d="M5.8,3 L10,1.6 L10.2,5.4 L8.8,8.4 L5.8,6.4 Z M8.8,8.4 L13.3,7 L13.3,10.5 L8.8,13.3 Z" fill="#ffffff"/><path d="M3,1.4 L5.8,3 L10,1.6 M5.8,3 L5.8,6.4 L8.8,8.4 L8.8,13.3 M8.8,8.4 L13.3,7 M10.2,5.4 L8.8,6" fill="none" stroke="#3c3c3c" stroke-width="0.9" stroke-linejoin="round"/></svg><span class="tx" style="letter-spacing:-0.15px">Stepper NEMA 17 -  20mm shaft</span></div>
<div class="row" style="top:440.56px"><svg width="14" height="14" viewBox="0 0 14 14" style=""><path d="M1.6,3.2 C1.6,0.7 11.4,0.7 11.4,3.2 L11.4,4.6 L8.6,7.4 L4.4,7.4 L1.6,4.6 Z" fill="#f0f0f0" stroke="#4e4e4e" stroke-width="1.1" stroke-linejoin="round"/><path d="M2,4.2 H11 M4.2,2.4 H8.8" stroke="#4e4e4e" stroke-width="0.9"/><path d="M4.6,7.4 V12.6 L6.5,13.8 L8.4,12.6 V7.4" fill="#e2e2e2" stroke="#4e4e4e" stroke-width="1.1" stroke-linejoin="round"/><path d="M4.6,9.2 H8.4 M4.6,11 H8.4" stroke="#4e4e4e" stroke-width="0.9"/></svg><span class="tx" style="letter-spacing:-0.18px">(-) DIN 912 M4 x 40 --- 20N&lt;2&gt;</span></div>
<div class="row" style="top:457.07px"><svg width="14" height="14" viewBox="0 0 14 14" style=""><path d="M1.6,3.2 C1.6,0.7 11.4,0.7 11.4,3.2 L11.4,4.6 L8.6,7.4 L4.4,7.4 L1.6,4.6 Z" fill="#f0f0f0" stroke="#4e4e4e" stroke-width="1.1" stroke-linejoin="round"/><path d="M2,4.2 H11 M4.2,2.4 H8.8" stroke="#4e4e4e" stroke-width="0.9"/><path d="M4.6,7.4 V12.6 L6.5,13.8 L8.4,12.6 V7.4" fill="#e2e2e2" stroke="#4e4e4e" stroke-width="1.1" stroke-linejoin="round"/><path d="M4.6,9.2 H8.4 M4.6,11 H8.4" stroke="#4e4e4e" stroke-width="0.9"/></svg><span class="tx" style="letter-spacing:-0.18px">(-) DIN 912 M4 x 40 --- 20N&lt;3&gt;</span></div>
<div class="row" style="top:473.58px"><i></i><svg width="14" height="14" viewBox="0 0 14 14" style=""><path d="M0.6,4.8 L3,1.4 L6.5,0.5 L10,1.6 L10.2,5.4 L13.3,7 L13.3,10.5 L9,13.5 L0.8,8 Z" fill="#f5cd2c" stroke="#8a6d10" stroke-width="1.1" stroke-linejoin="round"/><path d="M5.8,3 L10,1.6 L10.2,5.4 L8.8,8.4 L5.8,6.4 Z M8.8,8.4 L13.3,7 L13.3,10.5 L8.8,13.3 Z" fill="#fbe880"/><path d="M3,1.4 L5.8,3 L10,1.6 M5.8,3 L5.8,6.4 L8.8,8.4 L8.8,13.3 M8.8,8.4 L13.3,7 M10.2,5.4 L8.8,6" fill="none" stroke="#8a6d10" stroke-width="0.9" stroke-linejoin="round"/></svg><span class="tx" style="letter-spacing:0.01px">(-) 6mm shaft - 6mm hole&lt;3&gt;</span></div>
<div class="row" style="top:490.09px"><i></i><svg width="14" height="14" viewBox="0 0 14 14" style=""><path d="M0.6,4.8 L3,1.4 L6.5,0.5 L10,1.6 L10.2,5.4 L13.3,7 L13.3,10.5 L9,13.5 L0.8,8 Z" fill="#f5cd2c" stroke="#8a6d10" stroke-width="1.1" stroke-linejoin="round"/><path d="M5.8,3 L10,1.6 L10.2,5.4 L8.8,8.4 L5.8,6.4 Z M8.8,8.4 L13.3,7 L13.3,10.5 L8.8,13.3 Z" fill="#fbe880"/><path d="M3,1.4 L5.8,3 L10,1.6 M5.8,3 L5.8,6.4 L8.8,8.4 L8.8,13.3 M8.8,8.4 L13.3,7 M10.2,5.4 L8.8,6" fill="none" stroke="#8a6d10" stroke-width="0.9" stroke-linejoin="round"/></svg><span class="tx" style="letter-spacing:0.01px">(-) 6mm shaft - 6mm hole&lt;5&gt;</span></div>
<div class="row" style="top:506.60px"><i></i><svg width="14" height="14" viewBox="0 0 14 14" style=""><path d="M0.6,4.8 L3,1.4 L6.5,0.5 L10,1.6 L10.2,5.4 L13.3,7 L13.3,10.5 L9,13.5 L0.8,8 Z" fill="#f5cd2c" stroke="#8a6d10" stroke-width="1.1" stroke-linejoin="round"/><path d="M5.8,3 L10,1.6 L10.2,5.4 L8.8,8.4 L5.8,6.4 Z M8.8,8.4 L13.3,7 L13.3,10.5 L8.8,13.3 Z" fill="#fbe880"/><path d="M3,1.4 L5.8,3 L10,1.6 M5.8,3 L5.8,6.4 L8.8,8.4 L8.8,13.3 M8.8,8.4 L13.3,7 M10.2,5.4 L8.8,6" fill="none" stroke="#8a6d10" stroke-width="0.9" stroke-linejoin="round"/></svg><span class="tx" style="letter-spacing:-0.06px">(-) Ball Bearing- 6x13x5mm h1&lt;1&gt;</span></div>
<div class="row" style="top:523.11px"><i></i><svg width="14" height="14" viewBox="0 0 14 14" style=""><path d="M0.6,4.8 L3,1.4 L6.5,0.5 L10,1.6 L10.2,5.4 L13.3,7 L13.3,10.5 L9,13.5 L0.8,8 Z" fill="#f5cd2c" stroke="#8a6d10" stroke-width="1.1" stroke-linejoin="round"/><path d="M5.8,3 L10,1.6 L10.2,5.4 L8.8,8.4 L5.8,6.4 Z M8.8,8.4 L13.3,7 L13.3,10.5 L8.8,13.3 Z" fill="#fbe880"/><path d="M3,1.4 L5.8,3 L10,1.6 M5.8,3 L5.8,6.4 L8.8,8.4 L8.8,13.3 M8.8,8.4 L13.3,7 M10.2,5.4 L8.8,6" fill="none" stroke="#8a6d10" stroke-width="0.9" stroke-linejoin="round"/></svg><span class="tx" style="letter-spacing:-0.06px">(-) Ball Bearing- 6x13x5mm h1&lt;2&gt;</span></div>
<div class="row" style="top:539.62px"><i></i><svg width="14" height="14" viewBox="0 0 14 14" style=""><path d="M0.6,4.8 L3,1.4 L6.5,0.5 L10,1.6 L10.2,5.4 L13.3,7 L13.3,10.5 L9,13.5 L0.8,8 Z" fill="#f5cd2c" stroke="#8a6d10" stroke-width="1.1" stroke-linejoin="round"/><path d="M5.8,3 L10,1.6 L10.2,5.4 L8.8,8.4 L5.8,6.4 Z M8.8,8.4 L13.3,7 L13.3,10.5 L8.8,13.3 Z" fill="#fbe880"/><path d="M3,1.4 L5.8,3 L10,1.6 M5.8,3 L5.8,6.4 L8.8,8.4 L8.8,13.3 M8.8,8.4 L13.3,7 M10.2,5.4 L8.8,6" fill="none" stroke="#8a6d10" stroke-width="0.9" stroke-linejoin="round"/></svg><span class="tx" style="letter-spacing:0.01px">(-) 6mm shaft - 6mm hole&lt;6&gt;</span></div>
<div class="row" style="top:556.13px"><i></i><svg width="14" height="14" viewBox="0 0 14 14" style=""><path d="M0.6,4.8 L3,1.4 L6.5,0.5 L10,1.6 L10.2,5.4 L13.3,7 L13.3,10.5 L9,13.5 L0.8,8 Z" fill="#f5cd2c" stroke="#8a6d10" stroke-width="1.1" stroke-linejoin="round"/><path d="M5.8,3 L10,1.6 L10.2,5.4 L8.8,8.4 L5.8,6.4 Z M8.8,8.4 L13.3,7 L13.3,10.5 L8.8,13.3 Z" fill="#fbe880"/><path d="M3,1.4 L5.8,3 L10,1.6 M5.8,3 L5.8,6.4 L8.8,8.4 L8.8,13.3 M8.8,8.4 L13.3,7 M10.2,5.4 L8.8,6" fill="none" stroke="#8a6d10" stroke-width="0.9" stroke-linejoin="round"/></svg><span class="tx" style="letter-spacing:-0.06px">(-) Ball Bearing- 6x13x5mm h1&lt;3&gt;</span></div>
<div class="row" style="top:572.64px"><i></i><svg width="14" height="14" viewBox="0 0 14 14" style=""><path d="M0.6,4.8 L3,1.4 L6.5,0.5 L10,1.6 L10.2,5.4 L13.3,7 L13.3,10.5 L9,13.5 L0.8,8 Z" fill="#f5cd2c" stroke="#8a6d10" stroke-width="1.1" stroke-linejoin="round"/><path d="M5.8,3 L10,1.6 L10.2,5.4 L8.8,8.4 L5.8,6.4 Z M8.8,8.4 L13.3,7 L13.3,10.5 L8.8,13.3 Z" fill="#fbe880"/><path d="M3,1.4 L5.8,3 L10,1.6 M5.8,3 L5.8,6.4 L8.8,8.4 L8.8,13.3 M8.8,8.4 L13.3,7 M10.2,5.4 L8.8,6" fill="none" stroke="#8a6d10" stroke-width="0.9" stroke-linejoin="round"/></svg><span class="tx" style="letter-spacing:0.01px">(-) 6mm shaft - 6mm hole&lt;7&gt;</span></div>
<div class="row" style="top:589.15px"><i></i><svg width="14" height="14" viewBox="0 0 14 14" style=""><path d="M0.6,4.8 L3,1.4 L6.5,0.5 L10,1.6 L10.2,5.4 L13.3,7 L13.3,10.5 L9,13.5 L0.8,8 Z" fill="#f5cd2c" stroke="#8a6d10" stroke-width="1.1" stroke-linejoin="round"/><path d="M5.8,3 L10,1.6 L10.2,5.4 L8.8,8.4 L5.8,6.4 Z M8.8,8.4 L13.3,7 L13.3,10.5 L8.8,13.3 Z" fill="#fbe880"/><path d="M3,1.4 L5.8,3 L10,1.6 M5.8,3 L5.8,6.4 L8.8,8.4 L8.8,13.3 M8.8,8.4 L13.3,7 M10.2,5.4 L8.8,6" fill="none" stroke="#8a6d10" stroke-width="0.9" stroke-linejoin="round"/></svg><span class="tx" style="letter-spacing:0.01px">(-) 6mm shaft - 6mm hole&lt;9&gt;</span></div>
<div class="row" style="top:605.66px"><i></i><svg width="14" height="14" viewBox="0 0 14 14" style=""><path d="M0.6,4.8 L3,1.4 L6.5,0.5 L10,1.6 L10.2,5.4 L13.3,7 L13.3,10.5 L9,13.5 L0.8,8 Z" fill="#f5cd2c" stroke="#8a6d10" stroke-width="1.1" stroke-linejoin="round"/><path d="M5.8,3 L10,1.6 L10.2,5.4 L8.8,8.4 L5.8,6.4 Z M8.8,8.4 L13.3,7 L13.3,10.5 L8.8,13.3 Z" fill="#fbe880"/><path d="M3,1.4 L5.8,3 L10,1.6 M5.8,3 L5.8,6.4 L8.8,8.4 L8.8,13.3 M8.8,8.4 L13.3,7 M10.2,5.4 L8.8,6" fill="none" stroke="#8a6d10" stroke-width="0.9" stroke-linejoin="round"/></svg><span class="tx" style="letter-spacing:-0.06px">(-) Ball Bearing- 6x13x5mm h1&lt;4&gt;</span></div>
<div class="row" style="top:622.17px"><i></i><svg width="14" height="14" viewBox="0 0 14 14" style=""><path d="M0.6,4.8 L3,1.4 L6.5,0.5 L10,1.6 L10.2,5.4 L13.3,7 L13.3,10.5 L9,13.5 L0.8,8 Z" fill="#f5cd2c" stroke="#8a6d10" stroke-width="1.1" stroke-linejoin="round"/><path d="M5.8,3 L10,1.6 L10.2,5.4 L8.8,8.4 L5.8,6.4 Z M8.8,8.4 L13.3,7 L13.3,10.5 L8.8,13.3 Z" fill="#fbe880"/><path d="M3,1.4 L5.8,3 L10,1.6 M5.8,3 L5.8,6.4 L8.8,8.4 L8.8,13.3 M8.8,8.4 L13.3,7 M10.2,5.4 L8.8,6" fill="none" stroke="#8a6d10" stroke-width="0.9" stroke-linejoin="round"/></svg><span class="tx" style="letter-spacing:-0.06px">(-) Ball Bearing- 6x13x5mm h1&lt;5&gt;</span></div>
<div class="row" style="top:638.68px"><i></i><svg width="14" height="14" viewBox="0 0 14 14" style=""><path d="M0.6,4.8 L3,1.4 L6.5,0.5 L10,1.6 L10.2,5.4 L13.3,7 L13.3,10.5 L9,13.5 L0.8,8 Z" fill="#f5cd2c" stroke="#8a6d10" stroke-width="1.1" stroke-linejoin="round"/><path d="M5.8,3 L10,1.6 L10.2,5.4 L8.8,8.4 L5.8,6.4 Z M8.8,8.4 L13.3,7 L13.3,10.5 L8.8,13.3 Z" fill="#fbe880"/><path d="M3,1.4 L5.8,3 L10,1.6 M5.8,3 L5.8,6.4 L8.8,8.4 L8.8,13.3 M8.8,8.4 L13.3,7 M10.2,5.4 L8.8,6" fill="none" stroke="#8a6d10" stroke-width="0.9" stroke-linejoin="round"/></svg><span class="tx" style="letter-spacing:0.00px">(-) 6mm shaft - 6mm hole&lt;10&gt;</span></div>
<div class="row" style="top:655.19px"><i></i><svg width="14" height="14" viewBox="0 0 14 14" style=""><path d="M0.6,4.8 L3,1.4 L6.5,0.5 L10,1.6 L10.2,5.4 L13.3,7 L13.3,10.5 L9,13.5 L0.8,8 Z" fill="#f5cd2c" stroke="#8a6d10" stroke-width="1.1" stroke-linejoin="round"/><path d="M5.8,3 L10,1.6 L10.2,5.4 L8.8,8.4 L5.8,6.4 Z M8.8,8.4 L13.3,7 L13.3,10.5 L8.8,13.3 Z" fill="#fbe880"/><path d="M3,1.4 L5.8,3 L10,1.6 M5.8,3 L5.8,6.4 L8.8,8.4 L8.8,13.3 M8.8,8.4 L13.3,7 M10.2,5.4 L8.8,6" fill="none" stroke="#8a6d10" stroke-width="0.9" stroke-linejoin="round"/></svg><span class="tx" style="letter-spacing:-0.06px">(-) Ball Bearing- 6x13x5mm h1&lt;6&gt;</span></div>
<div class="row" style="top:671.70px"><i></i><svg width="14" height="14" viewBox="0 0 14 14" style=""><path d="M1.6,3.2 C1.6,0.7 11.4,0.7 11.4,3.2 L11.4,4.6 L8.6,7.4 L4.4,7.4 L1.6,4.6 Z" fill="#f0f0f0" stroke="#4e4e4e" stroke-width="1.1" stroke-linejoin="round"/><path d="M2,4.2 H11 M4.2,2.4 H8.8" stroke="#4e4e4e" stroke-width="0.9"/><path d="M4.6,7.4 V12.6 L6.5,13.8 L8.4,12.6 V7.4" fill="#e2e2e2" stroke="#4e4e4e" stroke-width="1.1" stroke-linejoin="round"/><path d="M4.6,9.2 H8.4 M4.6,11 H8.4" stroke="#4e4e4e" stroke-width="0.9"/></svg><span class="tx" style="letter-spacing:-0.22px">(-) DIN 988-4x8x0.1&lt;1&gt; (DIN 988</span></div>
<div class="row" style="top:688.21px"><i></i><svg width="14" height="14" viewBox="0 0 14 14" style=""><path d="M1.6,3.2 C1.6,0.7 11.4,0.7 11.4,3.2 L11.4,4.6 L8.6,7.4 L4.4,7.4 L1.6,4.6 Z" fill="#f0f0f0" stroke="#4e4e4e" stroke-width="1.1" stroke-linejoin="round"/><path d="M2,4.2 H11 M4.2,2.4 H8.8" stroke="#4e4e4e" stroke-width="0.9"/><path d="M4.6,7.4 V12.6 L6.5,13.8 L8.4,12.6 V7.4" fill="#e2e2e2" stroke="#4e4e4e" stroke-width="1.1" stroke-linejoin="round"/><path d="M4.6,9.2 H8.4 M4.6,11 H8.4" stroke="#4e4e4e" stroke-width="0.9"/></svg><span class="tx" style="letter-spacing:-0.22px">(-) DIN 988-4x8x0.1&lt;2&gt; (DIN 988</span></div>
<div class="row" style="top:704.72px"><i></i><svg width="14" height="14" viewBox="0 0 14 14" style=""><path d="M1.6,3.2 C1.6,0.7 11.4,0.7 11.4,3.2 L11.4,4.6 L8.6,7.4 L4.4,7.4 L1.6,4.6 Z" fill="#f0f0f0" stroke="#4e4e4e" stroke-width="1.1" stroke-linejoin="round"/><path d="M2,4.2 H11 M4.2,2.4 H8.8" stroke="#4e4e4e" stroke-width="0.9"/><path d="M4.6,7.4 V12.6 L6.5,13.8 L8.4,12.6 V7.4" fill="#e2e2e2" stroke="#4e4e4e" stroke-width="1.1" stroke-linejoin="round"/><path d="M4.6,9.2 H8.4 M4.6,11 H8.4" stroke="#4e4e4e" stroke-width="0.9"/></svg><span class="tx" style="letter-spacing:-0.22px">(-) DIN 988-4x8x0.1&lt;3&gt; (DIN 988</span></div>
<div class="row" style="top:721.23px"><i></i><svg width="14" height="14" viewBox="0 0 14 14" style=""><path d="M1.6,3.2 C1.6,0.7 11.4,0.7 11.4,3.2 L11.4,4.6 L8.6,7.4 L4.4,7.4 L1.6,4.6 Z" fill="#f0f0f0" stroke="#4e4e4e" stroke-width="1.1" stroke-linejoin="round"/><path d="M2,4.2 H11 M4.2,2.4 H8.8" stroke="#4e4e4e" stroke-width="0.9"/><path d="M4.6,7.4 V12.6 L6.5,13.8 L8.4,12.6 V7.4" fill="#e2e2e2" stroke="#4e4e4e" stroke-width="1.1" stroke-linejoin="round"/><path d="M4.6,9.2 H8.4 M4.6,11 H8.4" stroke="#4e4e4e" stroke-width="0.9"/></svg><span class="tx" style="letter-spacing:-0.22px">(-) DIN 988-4x8x0.1&lt;4&gt; (DIN 988</span></div>
<div class="row" style="top:737.74px"><i></i><svg width="14" height="14" viewBox="0 0 14 14" style=""><path d="M1.6,3.2 C1.6,0.7 11.4,0.7 11.4,3.2 L11.4,4.6 L8.6,7.4 L4.4,7.4 L1.6,4.6 Z" fill="#f0f0f0" stroke="#4e4e4e" stroke-width="1.1" stroke-linejoin="round"/><path d="M2,4.2 H11 M4.2,2.4 H8.8" stroke="#4e4e4e" stroke-width="0.9"/><path d="M4.6,7.4 V12.6 L6.5,13.8 L8.4,12.6 V7.4" fill="#e2e2e2" stroke="#4e4e4e" stroke-width="1.1" stroke-linejoin="round"/><path d="M4.6,9.2 H8.4 M4.6,11 H8.4" stroke="#4e4e4e" stroke-width="0.9"/></svg><span class="tx" style="letter-spacing:-0.22px">(-) DIN 988-4x8x0.1&lt;5&gt; (DIN 988</span></div>
<div class="row" style="top:754.25px"><i></i><svg width="14" height="14" viewBox="0 0 14 14" style=""><path d="M1.6,3.2 C1.6,0.7 11.4,0.7 11.4,3.2 L11.4,4.6 L8.6,7.4 L4.4,7.4 L1.6,4.6 Z" fill="#f0f0f0" stroke="#4e4e4e" stroke-width="1.1" stroke-linejoin="round"/><path d="M2,4.2 H11 M4.2,2.4 H8.8" stroke="#4e4e4e" stroke-width="0.9"/><path d="M4.6,7.4 V12.6 L6.5,13.8 L8.4,12.6 V7.4" fill="#e2e2e2" stroke="#4e4e4e" stroke-width="1.1" stroke-linejoin="round"/><path d="M4.6,9.2 H8.4 M4.6,11 H8.4" stroke="#4e4e4e" stroke-width="0.9"/></svg><span class="tx" style="letter-spacing:-0.22px">(-) DIN 988-4x8x0.1&lt;6&gt; (DIN 988</span></div>
<div class="row" style="top:770.76px"><i></i><svg width="14" height="14" viewBox="0 0 14 14" style=""><path d="M1.6,3.2 C1.6,0.7 11.4,0.7 11.4,3.2 L11.4,4.6 L8.6,7.4 L4.4,7.4 L1.6,4.6 Z" fill="#f0f0f0" stroke="#4e4e4e" stroke-width="1.1" stroke-linejoin="round"/><path d="M2,4.2 H11 M4.2,2.4 H8.8" stroke="#4e4e4e" stroke-width="0.9"/><path d="M4.6,7.4 V12.6 L6.5,13.8 L8.4,12.6 V7.4" fill="#e2e2e2" stroke="#4e4e4e" stroke-width="1.1" stroke-linejoin="round"/><path d="M4.6,9.2 H8.4 M4.6,11 H8.4" stroke="#4e4e4e" stroke-width="0.9"/></svg><span class="tx" style="letter-spacing:-0.16px">(-) DIN 7991 - M3 x 20 --- 16.8N&lt;1&gt;</span></div>
<div class="row" style="top:787.27px"><i></i><svg width="14" height="14" viewBox="0 0 14 14" style=""><path d="M1.6,3.2 C1.6,0.7 11.4,0.7 11.4,3.2 L11.4,4.6 L8.6,7.4 L4.4,7.4 L1.6,4.6 Z" fill="#f0f0f0" stroke="#4e4e4e" stroke-width="1.1" stroke-linejoin="round"/><path d="M2,4.2 H11 M4.2,2.4 H8.8" stroke="#4e4e4e" stroke-width="0.9"/><path d="M4.6,7.4 V12.6 L6.5,13.8 L8.4,12.6 V7.4" fill="#e2e2e2" stroke="#4e4e4e" stroke-width="1.1" stroke-linejoin="round"/><path d="M4.6,9.2 H8.4 M4.6,11 H8.4" stroke="#4e4e4e" stroke-width="0.9"/></svg><span class="tx" style="letter-spacing:-0.16px">(-) DIN 7991 - M3 x 20 --- 16.8N&lt;2&gt;</span></div>
<div class="row" style="top:803.78px"><i></i><svg width="14" height="14" viewBox="0 0 14 14" style=""><path d="M1.6,3.2 C1.6,0.7 11.4,0.7 11.4,3.2 L11.4,4.6 L8.6,7.4 L4.4,7.4 L1.6,4.6 Z" fill="#f0f0f0" stroke="#4e4e4e" stroke-width="1.1" stroke-linejoin="round"/><path d="M2,4.2 H11 M4.2,2.4 H8.8" stroke="#4e4e4e" stroke-width="0.9"/><path d="M4.6,7.4 V12.6 L6.5,13.8 L8.4,12.6 V7.4" fill="#e2e2e2" stroke="#4e4e4e" stroke-width="1.1" stroke-linejoin="round"/><path d="M4.6,9.2 H8.4 M4.6,11 H8.4" stroke="#4e4e4e" stroke-width="0.9"/></svg><span class="tx" style="letter-spacing:-0.16px">(-) DIN 7991 - M3 x 20 --- 16.8N&lt;3&gt;</span></div>
<div class="row" style="top:820.29px"><i></i><svg width="14" height="14" viewBox="0 0 14 14" style=""><path d="M1.6,3.2 C1.6,0.7 11.4,0.7 11.4,3.2 L11.4,4.6 L8.6,7.4 L4.4,7.4 L1.6,4.6 Z" fill="#f0f0f0" stroke="#4e4e4e" stroke-width="1.1" stroke-linejoin="round"/><path d="M2,4.2 H11 M4.2,2.4 H8.8" stroke="#4e4e4e" stroke-width="0.9"/><path d="M4.6,7.4 V12.6 L6.5,13.8 L8.4,12.6 V7.4" fill="#e2e2e2" stroke="#4e4e4e" stroke-width="1.1" stroke-linejoin="round"/><path d="M4.6,9.2 H8.4 M4.6,11 H8.4" stroke="#4e4e4e" stroke-width="0.9"/></svg><span class="tx" style="letter-spacing:-0.16px">(-) DIN 7991 - M3 x 20 --- 16.8N&lt;4&gt;</span></div>
<div class="row" style="top:836.80px"><i></i><svg width="14" height="14" viewBox="0 0 14 14" style=""><path d="M1.6,3.2 C1.6,0.7 11.4,0.7 11.4,3.2 L11.4,4.6 L8.6,7.4 L4.4,7.4 L1.6,4.6 Z" fill="#f0f0f0" stroke="#4e4e4e" stroke-width="1.1" stroke-linejoin="round"/><path d="M2,4.2 H11 M4.2,2.4 H8.8" stroke="#4e4e4e" stroke-width="0.9"/><path d="M4.6,7.4 V12.6 L6.5,13.8 L8.4,12.6 V7.4" fill="#e2e2e2" stroke="#4e4e4e" stroke-width="1.1" stroke-linejoin="round"/><path d="M4.6,9.2 H8.4 M4.6,11 H8.4" stroke="#4e4e4e" stroke-width="0.9"/></svg><span class="tx" style="letter-spacing:-0.16px">(-) DIN 7991 - M3 x 20 --- 16.8N&lt;5&gt;</span></div>
<div class="row" style="top:853.31px"><i></i><svg width="14" height="14" viewBox="0 0 14 14" style=""><path d="M1.6,3.2 C1.6,0.7 11.4,0.7 11.4,3.2 L11.4,4.6 L8.6,7.4 L4.4,7.4 L1.6,4.6 Z" fill="#f0f0f0" stroke="#4e4e4e" stroke-width="1.1" stroke-linejoin="round"/><path d="M2,4.2 H11 M4.2,2.4 H8.8" stroke="#4e4e4e" stroke-width="0.9"/><path d="M4.6,7.4 V12.6 L6.5,13.8 L8.4,12.6 V7.4" fill="#e2e2e2" stroke="#4e4e4e" stroke-width="1.1" stroke-linejoin="round"/><path d="M4.6,9.2 H8.4 M4.6,11 H8.4" stroke="#4e4e4e" stroke-width="0.9"/></svg><span class="tx" style="letter-spacing:-0.16px">(-) DIN 7991 - M3 x 20 --- 16.8N&lt;6&gt;</span></div>
<div class="row" style="top:869.82px"><i></i><svg width="14" height="14" viewBox="0 0 14 14" style=""><path d="M1.6,3.2 C1.6,0.7 11.4,0.7 11.4,3.2 L11.4,4.6 L8.6,7.4 L4.4,7.4 L1.6,4.6 Z" fill="#f0f0f0" stroke="#4e4e4e" stroke-width="1.1" stroke-linejoin="round"/><path d="M2,4.2 H11 M4.2,2.4 H8.8" stroke="#4e4e4e" stroke-width="0.9"/><path d="M4.6,7.4 V12.6 L6.5,13.8 L8.4,12.6 V7.4" fill="#e2e2e2" stroke="#4e4e4e" stroke-width="1.1" stroke-linejoin="round"/><path d="M4.6,9.2 H8.4 M4.6,11 H8.4" stroke="#4e4e4e" stroke-width="0.9"/></svg><span class="tx" style="letter-spacing:-0.33px">(-) DIN EN ISO 7040 - M3 - N&lt;2&gt;</span></div>
<div class="row" style="top:886.33px"><i></i><svg width="14" height="14" viewBox="0 0 14 14" style=""><path d="M1.6,3.2 C1.6,0.7 11.4,0.7 11.4,3.2 L11.4,4.6 L8.6,7.4 L4.4,7.4 L1.6,4.6 Z" fill="#f0f0f0" stroke="#4e4e4e" stroke-width="1.1" stroke-linejoin="round"/><path d="M2,4.2 H11 M4.2,2.4 H8.8" stroke="#4e4e4e" stroke-width="0.9"/><path d="M4.6,7.4 V12.6 L6.5,13.8 L8.4,12.6 V7.4" fill="#e2e2e2" stroke="#4e4e4e" stroke-width="1.1" stroke-linejoin="round"/><path d="M4.6,9.2 H8.4 M4.6,11 H8.4" stroke="#4e4e4e" stroke-width="0.9"/></svg><span class="tx" style="letter-spacing:-0.33px">(-) DIN EN ISO 7040 - M3 - N&lt;3&gt;</span></div>
<div class="row" style="top:902.84px"><i></i><svg width="14" height="14" viewBox="0 0 14 14" style=""><path d="M1.6,3.2 C1.6,0.7 11.4,0.7 11.4,3.2 L11.4,4.6 L8.6,7.4 L4.4,7.4 L1.6,4.6 Z" fill="#f0f0f0" stroke="#4e4e4e" stroke-width="1.1" stroke-linejoin="round"/><path d="M2,4.2 H11 M4.2,2.4 H8.8" stroke="#4e4e4e" stroke-width="0.9"/><path d="M4.6,7.4 V12.6 L6.5,13.8 L8.4,12.6 V7.4" fill="#e2e2e2" stroke="#4e4e4e" stroke-width="1.1" stroke-linejoin="round"/><path d="M4.6,9.2 H8.4 M4.6,11 H8.4" stroke="#4e4e4e" stroke-width="0.9"/></svg><span class="tx" style="letter-spacing:-0.33px">(-) DIN EN ISO 7040 - M3 - N&lt;4&gt;</span></div>
<div class="row" style="top:919.35px"><i></i><svg width="14" height="14" viewBox="0 0 14 14" style=""><path d="M1.6,3.2 C1.6,0.7 11.4,0.7 11.4,3.2 L11.4,4.6 L8.6,7.4 L4.4,7.4 L1.6,4.6 Z" fill="#f0f0f0" stroke="#4e4e4e" stroke-width="1.1" stroke-linejoin="round"/><path d="M2,4.2 H11 M4.2,2.4 H8.8" stroke="#4e4e4e" stroke-width="0.9"/><path d="M4.6,7.4 V12.6 L6.5,13.8 L8.4,12.6 V7.4" fill="#e2e2e2" stroke="#4e4e4e" stroke-width="1.1" stroke-linejoin="round"/><path d="M4.6,9.2 H8.4 M4.6,11 H8.4" stroke="#4e4e4e" stroke-width="0.9"/></svg><span class="tx" style="letter-spacing:-0.33px">(-) DIN EN ISO 7040 - M3 - N&lt;5&gt;</span></div>
<div class="row" style="top:935.86px"><i></i><svg width="14" height="14" viewBox="0 0 14 14" style=""><path d="M1.6,3.2 C1.6,0.7 11.4,0.7 11.4,3.2 L11.4,4.6 L8.6,7.4 L4.4,7.4 L1.6,4.6 Z" fill="#f0f0f0" stroke="#4e4e4e" stroke-width="1.1" stroke-linejoin="round"/><path d="M2,4.2 H11 M4.2,2.4 H8.8" stroke="#4e4e4e" stroke-width="0.9"/><path d="M4.6,7.4 V12.6 L6.5,13.8 L8.4,12.6 V7.4" fill="#e2e2e2" stroke="#4e4e4e" stroke-width="1.1" stroke-linejoin="round"/><path d="M4.6,9.2 H8.4 M4.6,11 H8.4" stroke="#4e4e4e" stroke-width="0.9"/></svg><span class="tx" style="letter-spacing:-0.33px">(-) DIN EN ISO 7040 - M3 - N&lt;6&gt;</span></div>
<div class="row" style="top:952.37px"><i></i><svg width="14" height="14" viewBox="0 0 14 14" style=""><path d="M1.6,3.2 C1.6,0.7 11.4,0.7 11.4,3.2 L11.4,4.6 L8.6,7.4 L4.4,7.4 L1.6,4.6 Z" fill="#f0f0f0" stroke="#4e4e4e" stroke-width="1.1" stroke-linejoin="round"/><path d="M2,4.2 H11 M4.2,2.4 H8.8" stroke="#4e4e4e" stroke-width="0.9"/><path d="M4.6,7.4 V12.6 L6.5,13.8 L8.4,12.6 V7.4" fill="#e2e2e2" stroke="#4e4e4e" stroke-width="1.1" stroke-linejoin="round"/><path d="M4.6,9.2 H8.4 M4.6,11 H8.4" stroke="#4e4e4e" stroke-width="0.9"/></svg><span class="tx" style="letter-spacing:-0.33px">(-) DIN EN ISO 7040 - M3 - N&lt;7&gt;</span></div>
<div class="row" style="top:968.88px"><i></i><svg width="14" height="14" viewBox="0 0 14 14" style=""><path d="M0.6,4.8 L3,1.4 L6.5,0.5 L10,1.6 L10.2,5.4 L13.3,7 L13.3,10.5 L9,13.5 L0.8,8 Z" fill="#f5cd2c" stroke="#8a6d10" stroke-width="1.1" stroke-linejoin="round"/><path d="M5.8,3 L10,1.6 L10.2,5.4 L8.8,8.4 L5.8,6.4 Z M8.8,8.4 L13.3,7 L13.3,10.5 L8.8,13.3 Z" fill="#fbe880"/><path d="M3,1.4 L5.8,3 L10,1.6 M5.8,3 L5.8,6.4 L8.8,8.4 L8.8,13.3 M8.8,8.4 L13.3,7 M10.2,5.4 L8.8,6" fill="none" stroke="#8a6d10" stroke-width="0.9" stroke-linejoin="round"/></svg><span class="tx" style="letter-spacing:-0.05px">(-) Threaded insert M3 h3&lt;3&gt; (Default)</span></div>
<div class="row" style="top:985.39px"><i></i><svg width="14" height="14" viewBox="0 0 14 14" style=""><path d="M1.6,3.2 C1.6,0.7 11.4,0.7 11.4,3.2 L11.4,4.6 L8.6,7.4 L4.4,7.4 L1.6,4.6 Z" fill="#f0f0f0" stroke="#4e4e4e" stroke-width="1.1" stroke-linejoin="round"/><path d="M2,4.2 H11 M4.2,2.4 H8.8" stroke="#4e4e4e" stroke-width="0.9"/><path d="M4.6,7.4 V12.6 L6.5,13.8 L8.4,12.6 V7.4" fill="#e2e2e2" stroke="#4e4e4e" stroke-width="1.1" stroke-linejoin="round"/><path d="M4.6,9.2 H8.4 M4.6,11 H8.4" stroke="#4e4e4e" stroke-width="0.9"/></svg><span class="tx" style="letter-spacing:-0.18px">(-) DIN 912 M3 x 16 --- 10N&lt;2&gt;</span></div>
<div class="row" style="top:1001.90px"><i></i><svg width="14" height="14" viewBox="0 0 14 14" style=""><path d="M1.6,3.2 C1.6,0.7 11.4,0.7 11.4,3.2 L11.4,4.6 L8.6,7.4 L4.4,7.4 L1.6,4.6 Z" fill="#f0f0f0" stroke="#4e4e4e" stroke-width="1.1" stroke-linejoin="round"/><path d="M2,4.2 H11 M4.2,2.4 H8.8" stroke="#4e4e4e" stroke-width="0.9"/><path d="M4.6,7.4 V12.6 L6.5,13.8 L8.4,12.6 V7.4" fill="#e2e2e2" stroke="#4e4e4e" stroke-width="1.1" stroke-linejoin="round"/><path d="M4.6,9.2 H8.4 M4.6,11 H8.4" stroke="#4e4e4e" stroke-width="0.9"/></svg><span class="tx" style="letter-spacing:-0.18px">(-) DIN 912 M3 x 16 --- 10N&lt;3&gt;</span></div>
<div class="a" style="left:159px;top:176px;width:12.5px;height:846px;background:#f1f1f1"></div>
<div class="a" style="left:159.5px;top:255px;width:11px;height:567px;background:#c2c2c2"></div>
<svg class="a" style="left:161px;top:180.5px" width="7" height="5" viewBox="0 0 7 5"><path d="M0.8 4.2 L3.5 1.2 L6.2 4.2" fill="none" stroke="#444" stroke-width="1.2"/></svg>
<div class="a" style="left:1px;top:1022px;width:158px;height:13px;background:#f1f1f1"></div>
<div class="a" style="left:12px;top:1024px;width:48px;height:10px;background:#c8c8c8"></div>
<svg class="a" style="left:5px;top:1025px" width="5" height="7" viewBox="0 0 5 7"><path d="M4 0.8 L1.2 3.5 L4 6.2" fill="none" stroke="#444" stroke-width="1.2"/></svg>
<svg class="a" style="left:150px;top:1025px" width="5" height="7" viewBox="0 0 5 7"><path d="M1 0.8 L3.8 3.5 L1 6.2" fill="none" stroke="#444" stroke-width="1.2"/></svg>
<div class="a" style="left:172px;top:556px;width:6px;height:29px;background:#fafafa;border:1px solid #c8c8c8;border-left:none;box-sizing:border-box"></div>
<div class="a" style="left:173.2px;top:568.5px;width:2px;height:2px;border:1px solid #aaa;border-radius:50%"></div>
<svg class="a" style="left:580px;top:140px" width="620" height="860" viewBox="580 140 620 860"><defs><linearGradient id="gSil" x1="0" y1="0" x2="0" y2="1"><stop offset="0" stop-color="#8d92a8"/><stop offset="0.18" stop-color="#c3c7d8"/><stop offset="0.4" stop-color="#e7e9f2"/><stop offset="0.6" stop-color="#b4b8cc"/><stop offset="0.82" stop-color="#eef0f7"/><stop offset="1" stop-color="#c9ccdb"/></linearGradient>
<linearGradient id="gHole" x1="0" y1="0" x2="1" y2="1"><stop offset="0" stop-color="#8a8d9c"/><stop offset="0.5" stop-color="#e9eaf1"/><stop offset="1" stop-color="#b5b8c6"/></linearGradient>
<linearGradient id="gGap" x1="0" y1="0" x2="1" y2="0"><stop offset="0" stop-color="#9497a8"/><stop offset="0.5" stop-color="#e4e6ee"/><stop offset="1" stop-color="#c4c7d4"/></linearGradient>
<linearGradient id="gCup" gradientUnits="userSpaceOnUse" x1="0" y1="285" x2="0" y2="870"><stop offset="0" stop-color="#1f58a4"/><stop offset="0.16" stop-color="#2160b4"/><stop offset="0.26" stop-color="#2a72d2"/><stop offset="0.30" stop-color="#2468c2"/><stop offset="0.40" stop-color="#1f62bb"/><stop offset="0.455" stop-color="#3d93f2"/><stop offset="0.49" stop-color="#2f7fe2"/><stop offset="0.56" stop-color="#2a76d8"/><stop offset="0.7" stop-color="#2e82e8"/><stop offset="0.85" stop-color="#3a90f2"/><stop offset="1" stop-color="#3a8ff0"/></linearGradient>
<linearGradient id="gCav" gradientUnits="userSpaceOnUse" x1="950" y1="0" x2="1085" y2="0"><stop offset="0" stop-color="#494b55"/><stop offset="0.3" stop-color="#5a5c68"/><stop offset="0.45" stop-color="#8f92a2"/><stop offset="1" stop-color="#9b9eae"/></linearGradient>
<linearGradient id="gRoll" x1="0" y1="0" x2="0" y2="1"><stop offset="0" stop-color="#f4f2ee"/><stop offset="0.35" stop-color="#ffffff"/><stop offset="0.7" stop-color="#c8c1b8"/><stop offset="1" stop-color="#8d877f"/></linearGradient>
<linearGradient id="gBore" x1="0" y1="0" x2="0" y2="1"><stop offset="0" stop-color="#d9d5cf"/><stop offset="0.5" stop-color="#ffffff"/><stop offset="1" stop-color="#bdb7ae"/></linearGradient>
<linearGradient id="gGapTop" x1="0" y1="0" x2="0" y2="1"><stop offset="0" stop-color="#8d90a0"/><stop offset="0.55" stop-color="#7f8292"/><stop offset="0.62" stop-color="#a9acbc"/><stop offset="1" stop-color="#9497a8"/></linearGradient>
<clipPath id="cLeft"><rect x="0" y="-600" width="600" height="1200"/></clipPath>
<linearGradient id="gCupP" gradientUnits="userSpaceOnUse" x1="0" y1="-295" x2="0" y2="295"><stop offset="0" stop-color="#1e57a3"/><stop offset="0.1" stop-color="#2060b2"/><stop offset="0.198" stop-color="#2565bb"/><stop offset="0.255" stop-color="#2a6dcc"/><stop offset="0.261" stop-color="#3f8de6"/><stop offset="0.268" stop-color="#2a6fd0"/><stop offset="0.289" stop-color="#2a6fd0"/><stop offset="0.295" stop-color="#5aa5f3"/><stop offset="0.302" stop-color="#2064be"/><stop offset="0.35" stop-color="#1e60b8"/><stop offset="0.36" stop-color="#3a82dc"/><stop offset="0.37" stop-color="#1e60b8"/><stop offset="0.41" stop-color="#1f62bb"/><stop offset="0.42" stop-color="#4ea6fb"/><stop offset="0.437" stop-color="#3b93f5"/><stop offset="0.449" stop-color="#58aafb"/><stop offset="0.46" stop-color="#2d7ade"/><stop offset="0.55" stop-color="#2b78da"/><stop offset="0.65" stop-color="#2e84ea"/><stop offset="0.7" stop-color="#3e96f6"/><stop offset="0.715" stop-color="#4aa0fa"/><stop offset="0.74" stop-color="#3990f2"/><stop offset="1.0" stop-color="#3d96f6"/></linearGradient>
<clipPath id="cCut"><rect x="600" y="100" width="294.6" height="900"/></clipPath>
<clipPath id="cCB"><rect x="600" y="100" width="285.3" height="900"/></clipPath>
<linearGradient id="gCavB" gradientUnits="userSpaceOnUse" x1="940" y1="0" x2="1085" y2="0"><stop offset="0" stop-color="#eceef5"/><stop offset="0.4" stop-color="#d4d7e3"/><stop offset="0.5" stop-color="#9497a6"/><stop offset="1" stop-color="#8d909e"/></linearGradient>
<linearGradient id="gHoleIn" x1="0" y1="0" x2="1" y2="0"><stop offset="0" stop-color="#1f4f90"/><stop offset="0.4" stop-color="#173f70"/><stop offset="1" stop-color="#1d4f8e"/></linearGradient></defs>
<g transform="matrix(-0.663,-0.05,0,1,881,577.5)">
<g clip-path="url(#cLeft)">
<circle r="401.5" fill="#7c7f8f" stroke="#25262e" stroke-width="1.4" vector-effect="non-scaling-stroke"/>
<circle r="397" fill="none" stroke="#9295a4" stroke-width="1" vector-effect="non-scaling-stroke" opacity="0.5"/>
<circle cx="372" cy="-0" r="15.5" fill="url(#gHole)" stroke="#25262e" stroke-width="1" vector-effect="non-scaling-stroke"/>
<circle cx="186" cy="-322.2" r="15.5" fill="url(#gHole)" stroke="#25262e" stroke-width="1" vector-effect="non-scaling-stroke"/>
<circle cx="186" cy="322.2" r="15.5" fill="url(#gHole)" stroke="#25262e" stroke-width="1" vector-effect="non-scaling-stroke"/>
<polygon points="-4,-347 -14.9,-316.6 -13.5,-285.7 -4.7,-286" fill="#7d7f8c"/>
<polygon points="-4,-347 4,-347 4.7,-286 -4.7,-286" fill="#c7cada"/>
<polygon points="4,-347 14.9,-316.6 13.5,-285.7 4.7,-286" fill="#f0f0f6"/>
<polygon points="-4,-347 4,-347 14.9,-316.6 13.5,-285.7 -13.5,-285.7 -14.9,-316.6" fill="none" stroke="#25262e" stroke-width="0.9" vector-effect="non-scaling-stroke" stroke-linejoin="round"/>
<polygon points="37.9,-344.9 23.3,-316.1 21.1,-285.2 29.8,-284.4" fill="#7d7f8c"/>
<polygon points="37.9,-344.9 45.8,-344 39.2,-283.3 29.8,-284.4" fill="#c7cada"/>
<polygon points="45.8,-344 53,-312.5 47.8,-282 39.2,-283.3" fill="#f0f0f6"/>
<polygon points="37.9,-344.9 45.8,-344 53,-312.5 47.8,-282 21.1,-285.2 23.3,-316.1" fill="none" stroke="#25262e" stroke-width="0.9" vector-effect="non-scaling-stroke" stroke-linejoin="round"/>
<polygon points="79.2,-337.9 61.3,-311 55.3,-280.6 63.8,-278.8" fill="#7d7f8c"/>
<polygon points="79.2,-337.9 86.9,-335.9 73,-276.5 63.8,-278.8" fill="#c7cada"/>
<polygon points="86.9,-335.9 90.3,-303.9 81.4,-274.2 73,-276.5" fill="#f0f0f6"/>
<polygon points="79.2,-337.9 86.9,-335.9 90.3,-303.9 81.4,-274.2 55.3,-280.6 61.3,-311" fill="none" stroke="#25262e" stroke-width="0.9" vector-effect="non-scaling-stroke" stroke-linejoin="round"/>
<polygon points="119.3,-325.8 98.3,-301.4 88.7,-271.9 97,-269.1" fill="#7d7f8c"/>
<polygon points="119.3,-325.8 126.8,-323 105.8,-265.7 97,-269.1" fill="#c7cada"/>
<polygon points="126.8,-323 126.2,-290.8 113.9,-262.3 105.8,-265.7" fill="#f0f0f6"/>
<polygon points="119.3,-325.8 126.8,-323 126.2,-290.8 113.9,-262.3 88.7,-271.9 98.3,-301.4" fill="none" stroke="#25262e" stroke-width="0.9" vector-effect="non-scaling-stroke" stroke-linejoin="round"/>
<polygon points="157.7,-309.1 133.9,-287.3 120.8,-259.2 128.7,-255.4" fill="#7d7f8c"/>
<polygon points="157.7,-309.1 164.8,-305.4 137.1,-251 128.7,-255.4" fill="#c7cada"/>
<polygon points="164.8,-305.4 160.4,-273.4 144.7,-246.7 137.1,-251" fill="#f0f0f6"/>
<polygon points="157.7,-309.1 164.8,-305.4 160.4,-273.4 144.7,-246.7 120.8,-259.2 133.9,-287.3" fill="none" stroke="#25262e" stroke-width="0.9" vector-effect="non-scaling-stroke" stroke-linejoin="round"/>
<polygon points="193.8,-287.8 167.6,-269.1 151.2,-242.8 158.5,-238" fill="#7d7f8c"/>
<polygon points="193.8,-287.8 200.4,-283.3 166.3,-232.6 158.5,-238" fill="#c7cada"/>
<polygon points="200.4,-283.3 192.2,-252.1 173.4,-227.5 166.3,-232.6" fill="#f0f0f6"/>
<polygon points="193.8,-287.8 200.4,-283.3 192.2,-252.1 173.4,-227.5 151.2,-242.8 167.6,-269.1" fill="none" stroke="#25262e" stroke-width="0.9" vector-effect="non-scaling-stroke" stroke-linejoin="round"/>
<polygon points="227.1,-262.4 198.8,-246.9 179.4,-222.8 186.1,-217.2" fill="#7d7f8c"/>
<polygon points="227.1,-262.4 233.1,-257.1 193.2,-210.9 186.1,-217.2" fill="#c7cada"/>
<polygon points="233.1,-257.1 221.2,-227.1 199.5,-204.9 193.2,-210.9" fill="#f0f0f6"/>
<polygon points="227.1,-262.4 233.1,-257.1 221.2,-227.1 199.5,-204.9 179.4,-222.8 198.8,-246.9" fill="none" stroke="#25262e" stroke-width="0.9" vector-effect="non-scaling-stroke" stroke-linejoin="round"/>
<polygon points="257.1,-233.1 227.1,-221.2 204.9,-199.5 210.9,-193.2" fill="#5f6069"/>
<polygon points="257.1,-233.1 262.4,-227.1 217.2,-186.1 210.9,-193.2" fill="#c7cada"/>
<polygon points="262.4,-227.1 246.9,-198.8 222.8,-179.4 217.2,-186.1" fill="#f0f0f6"/>
<polygon points="257.1,-233.1 262.4,-227.1 246.9,-198.8 222.8,-179.4 204.9,-199.5 227.1,-221.2" fill="none" stroke="#25262e" stroke-width="0.9" vector-effect="non-scaling-stroke" stroke-linejoin="round"/>
<polygon points="283.3,-200.4 252.1,-192.2 227.5,-173.4 232.6,-166.3" fill="#5f6069"/>
<polygon points="283.3,-200.4 287.8,-193.8 238,-158.5 232.6,-166.3" fill="#c7cada"/>
<polygon points="287.8,-193.8 269.1,-167.6 242.8,-151.2 238,-158.5" fill="#f0f0f6"/>
<polygon points="283.3,-200.4 287.8,-193.8 269.1,-167.6 242.8,-151.2 227.5,-173.4 252.1,-192.2" fill="none" stroke="#25262e" stroke-width="0.9" vector-effect="non-scaling-stroke" stroke-linejoin="round"/>
<polygon points="305.4,-164.8 273.4,-160.4 246.7,-144.7 251,-137.1" fill="#5f6069"/>
<polygon points="305.4,-164.8 309.1,-157.7 255.4,-128.7 251,-137.1" fill="#c7cada"/>
<polygon points="309.1,-157.7 287.3,-133.9 259.2,-120.8 255.4,-128.7" fill="#f0f0f6"/>
<polygon points="305.4,-164.8 309.1,-157.7 287.3,-133.9 259.2,-120.8 246.7,-144.7 273.4,-160.4" fill="none" stroke="#25262e" stroke-width="0.9" vector-effect="non-scaling-stroke" stroke-linejoin="round"/>
<polygon points="323,-126.8 290.8,-126.2 262.3,-113.9 265.7,-105.8" fill="#5f6069"/>
<polygon points="323,-126.8 325.8,-119.3 269.1,-97 265.7,-105.8" fill="#c7cada"/>
<polygon points="325.8,-119.3 301.4,-98.3 271.9,-88.7 269.1,-97" fill="#f0f0f6"/>
<polygon points="323,-126.8 325.8,-119.3 301.4,-98.3 271.9,-88.7 262.3,-113.9 290.8,-126.2" fill="none" stroke="#25262e" stroke-width="0.9" vector-effect="non-scaling-stroke" stroke-linejoin="round"/>
<polygon points="335.9,-86.9 303.9,-90.3 274.2,-81.4 276.5,-73" fill="#5f6069"/>
<polygon points="335.9,-86.9 337.9,-79.2 278.8,-63.8 276.5,-73" fill="#c7cada"/>
<polygon points="337.9,-79.2 311,-61.3 280.6,-55.3 278.8,-63.8" fill="#f0f0f6"/>
<polygon points="335.9,-86.9 337.9,-79.2 311,-61.3 280.6,-55.3 274.2,-81.4 303.9,-90.3" fill="none" stroke="#25262e" stroke-width="0.9" vector-effect="non-scaling-stroke" stroke-linejoin="round"/>
<polygon points="344,-45.8 312.5,-53 282,-47.8 283.3,-39.2" fill="#5f6069"/>
<polygon points="344,-45.8 344.9,-37.9 284.4,-29.8 283.3,-39.2" fill="#c7cada"/>
<polygon points="344.9,-37.9 316.1,-23.3 285.2,-21.1 284.4,-29.8" fill="#f0f0f6"/>
<polygon points="344,-45.8 344.9,-37.9 316.1,-23.3 285.2,-21.1 282,-47.8 312.5,-53" fill="none" stroke="#25262e" stroke-width="0.9" vector-effect="non-scaling-stroke" stroke-linejoin="round"/>
<polygon points="347,-4 316.6,-14.9 285.7,-13.5 286,-4.7" fill="#5f6069"/>
<polygon points="347,-4 347,4 286,4.7 286,-4.7" fill="#c7cada"/>
<polygon points="347,4 316.6,14.9 285.7,13.5 286,4.7" fill="#f0f0f6"/>
<polygon points="347,-4 347,4 316.6,14.9 285.7,13.5 285.7,-13.5 316.6,-14.9" fill="none" stroke="#25262e" stroke-width="0.9" vector-effect="non-scaling-stroke" stroke-linejoin="round"/>
<polygon points="344.9,37.9 316.1,23.3 285.2,21.1 284.4,29.8" fill="#5f6069"/>
<polygon points="344.9,37.9 344,45.8 283.3,39.2 284.4,29.8" fill="#c7cada"/>
<polygon points="344,45.8 312.5,53 282,47.8 283.3,39.2" fill="#f0f0f6"/>
<polygon points="344.9,37.9 344,45.8 312.5,53 282,47.8 285.2,21.1 316.1,23.3" fill="none" stroke="#25262e" stroke-width="0.9" vector-effect="non-scaling-stroke" stroke-linejoin="round"/>
<polygon points="337.9,79.2 311,61.3 280.6,55.3 278.8,63.8" fill="#5f6069"/>
<polygon points="337.9,79.2 335.9,86.9 276.5,73 278.8,63.8" fill="#c7cada"/>
<polygon points="335.9,86.9 303.9,90.3 274.2,81.4 276.5,73" fill="#f0f0f6"/>
<polygon points="337.9,79.2 335.9,86.9 303.9,90.3 274.2,81.4 280.6,55.3 311,61.3" fill="none" stroke="#25262e" stroke-width="0.9" vector-effect="non-scaling-stroke" stroke-linejoin="round"/>
<polygon points="325.8,119.3 301.4,98.3 271.9,88.7 269.1,97" fill="#5f6069"/>
<polygon points="325.8,119.3 323,126.8 265.7,105.8 269.1,97" fill="#c7cada"/>
<polygon points="323,126.8 290.8,126.2 262.3,113.9 265.7,105.8" fill="#f0f0f6"/>
<polygon points="325.8,119.3 323,126.8 290.8,126.2 262.3,113.9 271.9,88.7 301.4,98.3" fill="none" stroke="#25262e" stroke-width="0.9" vector-effect="non-scaling-stroke" stroke-linejoin="round"/>
<polygon points="309.1,157.7 287.3,133.9 259.2,120.8 255.4,128.7" fill="#5f6069"/>
<polygon points="309.1,157.7 305.4,164.8 251,137.1 255.4,128.7" fill="#c7cada"/>
<polygon points="305.4,164.8 273.4,160.4 246.7,144.7 251,137.1" fill="#f0f0f6"/>
<polygon points="309.1,157.7 305.4,164.8 273.4,160.4 246.7,144.7 259.2,120.8 287.3,133.9" fill="none" stroke="#25262e" stroke-width="0.9" vector-effect="non-scaling-stroke" stroke-linejoin="round"/>
<polygon points="287.8,193.8 269.1,167.6 242.8,151.2 238,158.5" fill="#5f6069"/>
<polygon points="287.8,193.8 283.3,200.4 232.6,166.3 238,158.5" fill="#c7cada"/>
<polygon points="283.3,200.4 252.1,192.2 227.5,173.4 232.6,166.3" fill="#f0f0f6"/>
<polygon points="287.8,193.8 283.3,200.4 252.1,192.2 227.5,173.4 242.8,151.2 269.1,167.6" fill="none" stroke="#25262e" stroke-width="0.9" vector-effect="non-scaling-stroke" stroke-linejoin="round"/>
<polygon points="262.4,227.1 246.9,198.8 222.8,179.4 217.2,186.1" fill="#5f6069"/>
<polygon points="262.4,227.1 257.1,233.1 210.9,193.2 217.2,186.1" fill="#c7cada"/>
<polygon points="257.1,233.1 227.1,221.2 204.9,199.5 210.9,193.2" fill="#f0f0f6"/>
<polygon points="262.4,227.1 257.1,233.1 227.1,221.2 204.9,199.5 222.8,179.4 246.9,198.8" fill="none" stroke="#25262e" stroke-width="0.9" vector-effect="non-scaling-stroke" stroke-linejoin="round"/>
<polygon points="233.1,257.1 221.2,227.1 199.5,204.9 193.2,210.9" fill="#5f6069"/>
<polygon points="233.1,257.1 227.1,262.4 186.1,217.2 193.2,210.9" fill="#c7cada"/>
<polygon points="227.1,262.4 198.8,246.9 179.4,222.8 186.1,217.2" fill="#f0f0f6"/>
<polygon points="233.1,257.1 227.1,262.4 198.8,246.9 179.4,222.8 199.5,204.9 221.2,227.1" fill="none" stroke="#25262e" stroke-width="0.9" vector-effect="non-scaling-stroke" stroke-linejoin="round"/>
<polygon points="200.4,283.3 192.2,252.1 173.4,227.5 166.3,232.6" fill="#7d7f8c"/>
<polygon points="200.4,283.3 193.8,287.8 158.5,238 166.3,232.6" fill="#c7cada"/>
<polygon points="193.8,287.8 167.6,269.1 151.2,242.8 158.5,238" fill="#f0f0f6"/>
<polygon points="200.4,283.3 193.8,287.8 167.6,269.1 151.2,242.8 173.4,227.5 192.2,252.1" fill="none" stroke="#25262e" stroke-width="0.9" vector-effect="non-scaling-stroke" stroke-linejoin="round"/>
<polygon points="164.8,305.4 160.4,273.4 144.7,246.7 137.1,251" fill="#7d7f8c"/>
<polygon points="164.8,305.4 157.7,309.1 128.7,255.4 137.1,251" fill="#c7cada"/>
<polygon points="157.7,309.1 133.9,287.3 120.8,259.2 128.7,255.4" fill="#f0f0f6"/>
<polygon points="164.8,305.4 157.7,309.1 133.9,287.3 120.8,259.2 144.7,246.7 160.4,273.4" fill="none" stroke="#25262e" stroke-width="0.9" vector-effect="non-scaling-stroke" stroke-linejoin="round"/>
<polygon points="126.8,323 126.2,290.8 113.9,262.3 105.8,265.7" fill="#7d7f8c"/>
<polygon points="126.8,323 119.3,325.8 97,269.1 105.8,265.7" fill="#c7cada"/>
<polygon points="119.3,325.8 98.3,301.4 88.7,271.9 97,269.1" fill="#f0f0f6"/>
<polygon points="126.8,323 119.3,325.8 98.3,301.4 88.7,271.9 113.9,262.3 126.2,290.8" fill="none" stroke="#25262e" stroke-width="0.9" vector-effect="non-scaling-stroke" stroke-linejoin="round"/>
<polygon points="86.9,335.9 90.3,303.9 81.4,274.2 73,276.5" fill="#7d7f8c"/>
<polygon points="86.9,335.9 79.2,337.9 63.8,278.8 73,276.5" fill="#c7cada"/>
<polygon points="79.2,337.9 61.3,311 55.3,280.6 63.8,278.8" fill="#f0f0f6"/>
<polygon points="86.9,335.9 79.2,337.9 61.3,311 55.3,280.6 81.4,274.2 90.3,303.9" fill="none" stroke="#25262e" stroke-width="0.9" vector-effect="non-scaling-stroke" stroke-linejoin="round"/>
<polygon points="45.8,344 53,312.5 47.8,282 39.2,283.3" fill="#7d7f8c"/>
<polygon points="45.8,344 37.9,344.9 29.8,284.4 39.2,283.3" fill="#c7cada"/>
<polygon points="37.9,344.9 23.3,316.1 21.1,285.2 29.8,284.4" fill="#f0f0f6"/>
<polygon points="45.8,344 37.9,344.9 23.3,316.1 21.1,285.2 47.8,282 53,312.5" fill="none" stroke="#25262e" stroke-width="0.9" vector-effect="non-scaling-stroke" stroke-linejoin="round"/>
<polygon points="4,347 14.9,316.6 13.5,285.7 4.7,286" fill="#7d7f8c"/>
<polygon points="4,347 -4,347 -4.7,286 4.7,286" fill="#c7cada"/>
<polygon points="-4,347 -14.9,316.6 -13.5,285.7 -4.7,286" fill="#f0f0f6"/>
<polygon points="4,347 -4,347 -14.9,316.6 -13.5,285.7 13.5,285.7 14.9,316.6" fill="none" stroke="#25262e" stroke-width="0.9" vector-effect="non-scaling-stroke" stroke-linejoin="round"/>
<polygon points="-57,-299.1 -51.8,-300.1 -45.9,-327.2 -36.9,-328.5 -24.5,-303.9 -19.1,-304.3 -19.1,-304.3 -13.8,-304.7 -4.6,-331 4.6,-331 13.8,-304.7 19.1,-304.3 19.1,-304.3 24.5,-303.9 36.9,-328.5 45.9,-327.2 51.8,-300.1 57,-299.1 57,-299.1 62.3,-297.9 77.5,-320 86.2,-317.3 88.7,-290.4 93.8,-288.7 93.8,-288.7 98.8,-286.8 116.2,-305.7 124.3,-301.8 123.9,-275.8 128.7,-273.4 128.7,-273.4 133.3,-270.9 152.2,-286.1 159.6,-281.1 156.7,-256.7 161,-253.7 161,-253.7 165.3,-250.6 184.8,-261.8 191.4,-256 186.4,-233.6 190.3,-230.1 190.3,-230.1 194.2,-226.5 213.5,-233.7 219.3,-227.1 212.8,-207 216.2,-203 216.2,-203 219.5,-199 238,-202.5 242.9,-195.3 235.5,-177.5 238.4,-173.2 238.4,-173.2 241.2,-168.8 258.3,-169 262.2,-161.4 254.3,-145.7 256.6,-141.1 256.6,-141.1 258.8,-136.4 274.3,-133.8 277.3,-125.8 269,-112 270.8,-107.2 270.8,-107.2 272.4,-102.4 286.2,-97.4 288.3,-89.3 279.7,-77.1 280.9,-72.1 280.9,-72.1 282,-67.1 294.2,-60.3 295.4,-52.1 286.4,-41.3 287,-36.3 287,-36.3 287.5,-31.2 298.3,-22.9 298.7,-14.7 289,-5.1 289,0 289,-0 289,5.1 298.7,14.7 298.3,22.9 287.5,31.2 287,36.3 287,36.3 286.4,41.3 295.4,52.1 294.2,60.3 282,67.1 280.9,72.1 280.9,72.1 279.7,77.1 288.3,89.3 286.2,97.4 272.4,102.4 270.8,107.2 270.8,107.2 269,112 277.3,125.8 274.3,133.8 258.8,136.4 256.6,141.1 256.6,141.1 254.3,145.7 262.2,161.4 258.3,169 241.2,168.8 238.4,173.2 238.4,173.2 235.5,177.5 242.9,195.3 238,202.5 219.5,199 216.2,203 216.2,203 212.8,207 219.3,227.1 213.5,233.7 194.2,226.5 190.3,230.1 190.3,230.1 186.4,233.6 191.4,256 184.8,261.8 165.3,250.6 161,253.7 161,253.7 156.7,256.7 159.6,281.1 152.2,286.1 133.3,270.9 128.7,273.4 128.7,273.4 123.9,275.8 124.3,301.8 116.2,305.7 98.8,286.8 93.8,288.7 93.8,288.7 88.7,290.4 86.2,317.3 77.5,320 62.3,297.9 57,299.1 57,299.1 51.8,300.1 45.9,327.2 36.9,328.5 24.5,303.9 19.1,304.3 19.1,304.3 13.8,304.7 4.6,331 -4.6,331 -13.8,304.7 -19.1,304.3 -19.1,304.3 -24.5,303.9 -36.9,328.5 -45.9,327.2 -51.8,300.1 -57,299.1 -51.1,290.1 -34.2,292.8 -17.1,294.4 0,295 17.1,294.4 34.2,292.8 51.1,290.1 67.8,286.2 84.2,281.4 100.3,275.5 115.9,268.6 131,260.8 145.5,252.1 159.5,242.5 172.8,232.1 185.4,221 197.3,209.2 208.5,196.7 218.9,183.7 228.5,170.1 237.2,156 245.2,141.5 252.3,126.7 258.5,111.5 264,96.1 268.6,80.4 272.3,64.5 275.2,48.5 277.3,32.4 278.6,16.2 279,-0 278.6,-16.2 277.3,-32.4 275.2,-48.5 272.3,-64.5 268.6,-80.4 264,-96.1 258.5,-111.5 252.3,-126.7 245.2,-141.5 237.2,-156 228.5,-170.1 218.9,-183.7 208.5,-196.7 197.3,-209.2 185.4,-221 172.8,-232.1 159.5,-242.5 145.5,-252.1 131,-260.8 115.9,-268.6 100.3,-275.5 84.2,-281.4 67.8,-286.2 51.1,-290.1 34.2,-292.8 17.1,-294.4 -0,-295 -17.1,-294.4 -34.2,-292.8 -51.1,-290.1" fill="#2a66bd" stroke="#25262e" stroke-width="0.8" vector-effect="non-scaling-stroke" stroke-linejoin="round"/>
<polygon points="-51.8,-300.1 -45.9,-327.2 -44.3,-301.4" fill="#4a9cf4"/>
<polygon points="-13.8,-304.7 -4.6,-331 -6.1,-304.9" fill="#4a9cf4"/>
<polygon points="24.5,-303.9 36.9,-328.5 32.1,-303.1" fill="#4a9cf4"/>
<polygon points="62.3,-297.9 77.5,-320 69.7,-296.1" fill="#4a9cf4"/>
<polygon points="98.8,-286.8 116.2,-305.7 105.9,-284" fill="#4a9cf4"/>
<polygon points="133.3,-270.9 152.2,-286.1 140,-267.2" fill="#4a9cf4"/>
<polygon points="165.3,-250.6 184.8,-261.8 171.3,-246.1" fill="#4a9cf4"/>
<polygon points="194.2,-226.5 213.5,-233.7 199.5,-221.2" fill="#4a9cf4"/>
<polygon points="219.5,-199 238,-202.5 224.2,-193.2" fill="#4a9cf4"/>
<polygon points="241.2,-168.8 258.3,-169 245,-162.5" fill="#4a9cf4"/>
<polygon points="258.8,-136.4 274.3,-133.8 261.9,-129.7" fill="#4a9cf4"/>
<polygon points="272.4,-102.4 286.2,-97.4 274.7,-95.4" fill="#4a9cf4"/>
<polygon points="282,-67.1 294.2,-60.3 283.4,-60" fill="#4a9cf4"/>
<polygon points="287.5,-31.2 298.3,-22.9 288.1,-24" fill="#4a9cf4"/>
<polygon points="289,5.1 298.7,14.7 288.8,12.3" fill="#4a9cf4"/>
<polygon points="286.4,41.3 295.4,52.1 285.4,48.5" fill="#4a9cf4"/>
<polygon points="279.7,77.1 288.3,89.3 277.9,84.2" fill="#4a9cf4"/>
<polygon points="269,112 277.3,125.8 266.4,118.9" fill="#4a9cf4"/>
<polygon points="254.3,145.7 262.2,161.4 250.8,152.2" fill="#4a9cf4"/>
<polygon points="235.5,177.5 242.9,195.3 231.3,183.6" fill="#4a9cf4"/>
<polygon points="212.8,207 219.3,227.1 207.8,212.6" fill="#4a9cf4"/>
<polygon points="186.4,233.6 191.4,256 180.7,238.5" fill="#4a9cf4"/>
<polygon points="156.7,256.7 159.6,281.1 150.3,260.9" fill="#4a9cf4"/>
<polygon points="123.9,275.8 124.3,301.8 117.1,279.1" fill="#4a9cf4"/>
<polygon points="88.7,290.4 86.2,317.3 81.5,292.8" fill="#4a9cf4"/>
<polygon points="51.8,300.1 45.9,327.2 44.3,301.4" fill="#4a9cf4"/>
<polygon points="13.8,304.7 4.6,331 6.1,304.9" fill="#4a9cf4"/>
<polygon points="-24.5,303.9 -36.9,328.5 -32.1,303.1" fill="#4a9cf4"/>
<polygon points="-51.1,-290.1 -34.2,-292.8 -17.1,-294.4 -0,-295 17.1,-294.4 34.2,-292.8 51.1,-290.1 67.8,-286.2 84.2,-281.4 100.3,-275.5 115.9,-268.6 131,-260.8 145.5,-252.1 159.5,-242.5 172.8,-232.1 185.4,-221 197.3,-209.2 208.5,-196.7 218.9,-183.7 228.5,-170.1 237.2,-156 245.2,-141.5 252.3,-126.7 258.5,-111.5 264,-96.1 268.6,-80.4 272.3,-64.5 275.2,-48.5 277.3,-32.4 278.6,-16.2 279,-0 278.6,16.2 277.3,32.4 275.2,48.5 272.3,64.5 268.6,80.4 264,96.1 258.5,111.5 252.3,126.7 245.2,141.5 237.2,156 228.5,170.1 218.9,183.7 208.5,196.7 197.3,209.2 185.4,221 172.8,232.1 159.5,242.5 145.5,252.1 131,260.8 115.9,268.6 100.3,275.5 84.2,281.4 67.8,286.2 51.1,290.1 34.2,292.8 17.1,294.4 0,295 -17.1,294.4 -34.2,292.8 -51.1,290.1" fill="url(#gCupP)" stroke="#25262e" stroke-width="1" vector-effect="non-scaling-stroke"/>
</g></g>
<path d="M930,294 L866,296 C846,330 832,375 835,412 C838,440 845,462 851,480 L851,670 C845,690 838,712 835,736 C832,775 846,822 866,858 L930,854 Z" fill="#8e91a2" stroke="#25262e" stroke-width="0.9"/>
<g transform="rotate(4 820 359)">
<ellipse cx="849" cy="357.2" rx="36" ry="54" fill="url(#gRoll)" stroke="#25262e" stroke-width="0.8"/>
<polygon points="820,305 849,303.2 849,411.2 820,413" fill="url(#gRoll)"/>
<path d="M820,305 L849,303.2 M820,413 L849,411.2" stroke="#25262e" stroke-width="0.8"/>
<ellipse cx="820" cy="359" rx="36" ry="54" fill="#b7afa5" stroke="#25262e" stroke-width="0.7"/>
<ellipse cx="819.5" cy="359" rx="32.5" ry="49.5" fill="#6c6b6b" stroke="#25262e" stroke-width="0.7"/>
<ellipse cx="818.5" cy="359" rx="23" ry="35.5" fill="#b1a99f" stroke="#25262e" stroke-width="0.7"/>
<ellipse cx="817" cy="359" rx="18.5" ry="28.5" fill="#8c8680" stroke="#25262e" stroke-width="0.7"/>
<ellipse cx="812" cy="359" rx="15.5" ry="24" fill="#aaa299" stroke="#25262e" stroke-width="0.7"/>
<ellipse cx="809" cy="359" rx="15.5" ry="24" fill="#b0a89f" stroke="#25262e" stroke-width="0.7"/>
<polygon points="812.9,359.5 810.7,364.9 806.3,364.9 804.1,359.5 806.3,354.1 810.7,354.1" fill="#e2dcd3" stroke="#25262e" stroke-width="0.7"/>
</g>
<g transform="rotate(4 824 788)">
<ellipse cx="853" cy="786.2" rx="36" ry="54" fill="url(#gRoll)" stroke="#25262e" stroke-width="0.8"/>
<polygon points="824,734 853,732.2 853,840.2 824,842" fill="url(#gRoll)"/>
<path d="M824,734 L853,732.2 M824,842 L853,840.2" stroke="#25262e" stroke-width="0.8"/>
<ellipse cx="824" cy="788" rx="36" ry="54" fill="#b7afa5" stroke="#25262e" stroke-width="0.7"/>
<ellipse cx="823.5" cy="788" rx="32.5" ry="49.5" fill="#6c6b6b" stroke="#25262e" stroke-width="0.7"/>
<ellipse cx="822.5" cy="788" rx="23" ry="35.5" fill="#b1a99f" stroke="#25262e" stroke-width="0.7"/>
<ellipse cx="821" cy="788" rx="18.5" ry="28.5" fill="#8c8680" stroke="#25262e" stroke-width="0.7"/>
<ellipse cx="816" cy="788" rx="15.5" ry="24" fill="#aaa299" stroke="#25262e" stroke-width="0.7"/>
<ellipse cx="813" cy="788" rx="15.5" ry="24" fill="#b0a89f" stroke="#25262e" stroke-width="0.7"/>
<polygon points="816.9,788.5 814.7,793.9 810.3,793.9 808.1,788.5 810.3,783.1 814.7,783.1" fill="#e2dcd3" stroke="#25262e" stroke-width="0.7"/>
</g>
<g clip-path="url(#cCut)">
<ellipse cx="894.4" cy="336.5" rx="37" ry="47.5" fill="#b7afa5" stroke="#25262e" stroke-width="0.7"/>
<ellipse cx="894.4" cy="336.5" rx="33.5" ry="43.5" fill="#6c6b6b" stroke="#25262e" stroke-width="0.7"/>
<ellipse cx="894.4" cy="336.5" rx="25" ry="33" fill="#b1a99f" stroke="#25262e" stroke-width="0.7"/>
<ellipse cx="894.4" cy="336.5" rx="19" ry="25.5" fill="#8c8680" stroke="#25262e" stroke-width="0.7"/>
</g>
<g clip-path="url(#cCut)">
<ellipse cx="894.4" cy="820" rx="37" ry="47.5" fill="#b7afa5" stroke="#25262e" stroke-width="0.7"/>
<ellipse cx="894.4" cy="820" rx="33.5" ry="43.5" fill="#6c6b6b" stroke="#25262e" stroke-width="0.7"/>
<ellipse cx="894.4" cy="820" rx="25" ry="33" fill="#b1a99f" stroke="#25262e" stroke-width="0.7"/>
<ellipse cx="894.4" cy="820" rx="19" ry="25.5" fill="#8c8680" stroke="#25262e" stroke-width="0.7"/>
</g>
<g clip-path="url(#cCB)">
<ellipse cx="871.3" cy="578.1" rx="67.6" ry="102" fill="#bab2a8" stroke="#25262e" stroke-width="0.8"/>
<ellipse cx="871.3" cy="578.1" rx="63.3" ry="95.5" fill="#6b6b6c" stroke="#25262e" stroke-width="0.8"/>
<ellipse cx="871.3" cy="578.1" rx="51.1" ry="77" fill="#b8b0a6" stroke="#25262e" stroke-width="0.8"/>
<ellipse cx="871.3" cy="578.1" rx="45.1" ry="68" fill="url(#gBore)" stroke="#25262e" stroke-width="0.8"/>
<ellipse cx="885.3" cy="577.2" rx="45.1" ry="68" fill="#8e91a2" stroke="#25262e" stroke-width="0.8"/>
</g>
<rect x="870.8" y="514" width="13.7" height="127" fill="#8e91a2"/>
<g transform="matrix(1,-0.063,0,1,0,55.6)">
<polygon points="936,247 1086,247 1086,380 1074,380 1074,288 1064,277 952,276 936,252" fill="url(#gCav)" stroke="#25262e" stroke-width="0.8" stroke-linejoin="round"/>
<polygon points="979,276 1000,260 1036,247 1086,247 1086,380 1074,380 1074,288 1064,276.4" fill="#8f92a2" stroke="none" stroke-width="0.8" stroke-linejoin="round"/>
<polygon points="879.4,231.5 943.7,232 951.2,248 945,260 936.2,251.5 870,251.5 870,260" fill="url(#gGapTop)" stroke="#25262e" stroke-width="0.8" stroke-linejoin="round"/>
<polygon points="943.7,232 951.2,248 940,248" fill="#55575f" stroke="none" stroke-width="0.8" stroke-linejoin="round"/>
<polygon points="880.6,176 1136,176 1136,410 1130,410 1130,379 1085,379 1085,248 951.2,248 943.7,232 880.6,231.5" fill="#b3b8ce" stroke="#25262e" stroke-width="0.8" stroke-linejoin="round"/>
<path d="M989.5,176 V248" stroke="#25262e" stroke-width="0.9"/>
<rect x="929.4" y="296" width="136.6" height="175" fill="#265fa6" stroke="none" stroke-width="0.8"/>
<rect x="880" y="287.5" width="88" height="10.5" fill="#1f4d8f" stroke="none" stroke-width="0.8"/>
<polygon points="967,293 1040,296 1066,301 1066,322 1046,309 1010,301 967,298" fill="#2b68bc" stroke="none" stroke-width="0.8" stroke-linejoin="round"/>
<polygon points="924,287.5 1062,287.5 1066,292 1066,301 1040,296 924,293" fill="#1d4a8a" stroke="none" stroke-width="0.8" stroke-linejoin="round"/>
<rect x="1002.5" y="470" width="73.5" height="56" fill="#2a70d2" stroke="none" stroke-width="0.8"/>
<rect x="1107" y="511" width="51" height="67" fill="url(#gHoleIn)" stroke="none" stroke-width="0.8"/>
<polygon points="880.6,251.5 936.2,251.5 952,276.4 1065,276.4 1076,287 1076,398 1085,398 1085,431.5 1154.5,431.5 1154.5,511.5 1107,510 1107,490 1076,490 1076,501.5 1065,501.5 1065,491.6 1050,491.6 1050,430 1066,430 1066,295 1059,288 880.6,288" fill="#2b7de0" stroke="#25262e" stroke-width="0.8" stroke-linejoin="round"/>
<rect x="1076" y="382" width="10" height="31" fill="#6a6a68" stroke="#25262e" stroke-width="0.8"/>
<rect x="1085" y="379" width="45" height="51" fill="#cbc2b7" stroke="#25262e" stroke-width="0.8"/>
<path d="M1045,518 C1052,506 1064,498 1076,496 V506 C1068,508 1060,512 1056,520 Z" fill="#3e3e40" stroke="#25262e" stroke-width="0.6"/>
<path d="M1038,520 C1042,512 1046,508 1050,505 L1045,518 Z" fill="#1f539a" stroke="#25262e" stroke-width="0.6"/>
<polygon points="929.4,297 966.9,297 966.9,470 1002.5,470 1002.5,520 1076,520 1076,525 1110.5,525 1110.5,578 884.5,578 884.5,514 902,514 902,503 929.4,503" fill="#b3b8ce" stroke="#25262e" stroke-width="0.8" stroke-linejoin="round"/>
<path d="M966.9,297 V578" stroke="#25262e" stroke-width="0.9"/>
<ellipse cx="1108" cy="547.5" rx="9" ry="15.5" fill="#2f80e2" stroke="#25262e" stroke-width="0.7"/>
<path d="M884.5,532 H1104 C1097,540 1097,555 1104,563 H884.5 C872,556 872,539 884.5,532 Z" fill="url(#gSil)" stroke="#25262e" stroke-width="0.8"/>
<path d="M967.3,531.5 C955,539 955,556 967.3,563.5" fill="none" stroke="#25262e" stroke-width="0.8"/>
<rect x="871" y="476" width="31" height="38" fill="#cbc2b7" stroke="#25262e" stroke-width="0.8"/>
<rect x="1076" y="490" width="31" height="38.5" fill="#cbc2b7" stroke="#25262e" stroke-width="0.8"/>
<rect x="935.4" y="472" width="31.9" height="5.5" fill="#e8862e" stroke="#25262e" stroke-width="0.8"/>
<rect x="935.4" y="503" width="31.9" height="5.5" fill="#e8862e" stroke="#25262e" stroke-width="0.8"/>
<polygon points="938.7,477.5 1002.5,477.5 1002.5,464 1021,464 1021,509 1002.5,509 1002.5,503 938.7,503" fill="#b1a89e" stroke="#25262e" stroke-width="0.8" stroke-linejoin="round"/>
<rect x="895" y="289.3" width="29.4" height="16.2" fill="#cbc2b7" stroke="#25262e" stroke-width="0.8"/>
<rect x="895" y="355.5" width="29.4" height="30" fill="#cbc2b7" stroke="#25262e" stroke-width="0.8"/>
<rect x="895" y="307" width="33.8" height="13" fill="#b3b8ce" stroke="#25262e" stroke-width="0.8"/>
<rect x="895" y="341" width="33.8" height="14.5" fill="#b3b8ce" stroke="#25262e" stroke-width="0.8"/>
<polygon points="968,307 993,307 995,310 995,320 968,320" fill="#b1a89e" stroke="#25262e" stroke-width="0.8" stroke-linejoin="round"/>
<polygon points="968,341 995,341 995,349 993,352 968,352" fill="#b1a89e" stroke="#25262e" stroke-width="0.8" stroke-linejoin="round"/>
<polygon points="893,320 1009.4,320 1009.4,341 893,341" fill="#b1a89e" stroke="#25262e" stroke-width="0.8" stroke-linejoin="round"/>
<path d="M893,304 C872,306 864,320 864,330.5 C864,341 872,355 893,357 Z" fill="#a69e95" stroke="#25262e" stroke-width="0.7"/>
<polygon points="882.5,304 893,318 893,343 882.5,357" fill="#9c948b" stroke="none" stroke-width="0.8" stroke-linejoin="round"/>
<polygon points="874,325 879,321 886,322 890,330 886,338 879,339 874,335" fill="#8a847d" stroke="#25262e" stroke-width="0.8" stroke-linejoin="round"/>
<polygon points="874,325 879,321 881,336 874,335" fill="#e4ded5" stroke="#25262e" stroke-width="0.8" stroke-linejoin="round"/>
<path d="M1024.4,432 C1012,436 1006,450 1008,466 C1010,478 1016,486 1024.4,490 Z" fill="#8e8880" stroke="#25262e" stroke-width="0.7"/>
<rect x="1113" y="442.3" width="4" height="35" fill="#1f539a" stroke="none" stroke-width="0.8"/>
<rect x="1076" y="437" width="31" height="5.5" fill="#e8862e" stroke="#25262e" stroke-width="0.8"/>
<rect x="1076" y="477.3" width="31" height="5.7" fill="#e8862e" stroke="#25262e" stroke-width="0.8"/>
<polygon points="1024.4,432 1050,432 1050,442.3 1113,442.3 1113,477.3 1050,477.3 1050,490 1024.4,490" fill="#b1a89e" stroke="#25262e" stroke-width="0.8" stroke-linejoin="round"/>
<polygon points="1019,452 1027,447 1037,450 1041,460 1036,471 1026,473 1022,468" fill="#9a938b" stroke="#25262e" stroke-width="0.8" stroke-linejoin="round"/>
<polygon points="1019,452 1027,447 1030,466 1022,468" fill="#e4ded5" stroke="#25262e" stroke-width="0.8" stroke-linejoin="round"/>
<g transform="matrix(1,0,0,-1,0,1156)"><polygon points="936,247 1086,247 1086,380 1074,380 1074,288 1064,277 952,276 936,252" fill="url(#gCavB)" stroke="#25262e" stroke-width="0.8" stroke-linejoin="round"/>
<polygon points="1010,276 1030,262 1060,247 1086,247 1086,380 1074,380 1074,288 1064,276.4" fill="#8d909e" stroke="none" stroke-width="0.8" stroke-linejoin="round"/>
<polygon points="879.4,231.5 943.7,232 951.2,248 945,260 936.2,251.5 870,251.5 870,260" fill="#dfe1ec" stroke="#25262e" stroke-width="0.8" stroke-linejoin="round"/>
<polygon points="943.7,232 951.2,248 940,248" fill="#b9bccb" stroke="none" stroke-width="0.8" stroke-linejoin="round"/>
<polygon points="880.6,176 1136,176 1136,410 1130,410 1130,379 1085,379 1085,248 951.2,248 943.7,232 880.6,231.5" fill="#b3b8ce" stroke="#25262e" stroke-width="0.8" stroke-linejoin="round"/>
<path d="M989.5,176 V248" stroke="#25262e" stroke-width="0.9"/>
<rect x="929.4" y="296" width="136.6" height="175" fill="#265fa6" stroke="none" stroke-width="0.8"/>
<rect x="880" y="287.5" width="88" height="10.5" fill="#1f4d8f" stroke="none" stroke-width="0.8"/>
<polygon points="967,293 1040,296 1066,301 1066,322 1046,309 1010,301 967,298" fill="#2b68bc" stroke="none" stroke-width="0.8" stroke-linejoin="round"/>
<polygon points="924,287.5 1062,287.5 1066,292 1066,301 1040,296 924,293" fill="#1d4a8a" stroke="none" stroke-width="0.8" stroke-linejoin="round"/>
<rect x="1002.5" y="470" width="73.5" height="56" fill="#2a70d2" stroke="none" stroke-width="0.8"/>
<rect x="1107" y="511" width="51" height="67" fill="url(#gHoleIn)" stroke="none" stroke-width="0.8"/>
<polygon points="880.6,251.5 936.2,251.5 952,276.4 1065,276.4 1076,287 1076,398 1085,398 1085,431.5 1154.5,431.5 1154.5,511.5 1107,510 1107,490 1076,490 1076,501.5 1065,501.5 1065,491.6 1050,491.6 1050,430 1066,430 1066,295 1059,288 880.6,288" fill="#2b7de0" stroke="#25262e" stroke-width="0.8" stroke-linejoin="round"/>
<rect x="1076" y="382" width="10" height="31" fill="#6a6a68" stroke="#25262e" stroke-width="0.8"/>
<rect x="1085" y="379" width="45" height="51" fill="#cbc2b7" stroke="#25262e" stroke-width="0.8"/>
<path d="M1045,518 C1052,506 1064,498 1076,496 V506 C1068,508 1060,512 1056,520 Z" fill="#3e3e40" stroke="#25262e" stroke-width="0.6"/>
<path d="M1038,520 C1042,512 1046,508 1050,505 L1045,518 Z" fill="#1f539a" stroke="#25262e" stroke-width="0.6"/>
<polygon points="929.4,297 966.9,297 966.9,470 1002.5,470 1002.5,520 1076,520 1076,525 1110.5,525 1110.5,578 884.5,578 884.5,514 902,514 902,503 929.4,503" fill="#b3b8ce" stroke="#25262e" stroke-width="0.8" stroke-linejoin="round"/>
<path d="M966.9,297 V578" stroke="#25262e" stroke-width="0.9"/>
<ellipse cx="1108" cy="547.5" rx="9" ry="15.5" fill="#2f80e2" stroke="#25262e" stroke-width="0.7"/>
<path d="M884.5,532 H1104 C1097,540 1097,555 1104,563 H884.5 C872,556 872,539 884.5,532 Z" fill="url(#gSil)" stroke="#25262e" stroke-width="0.8"/>
<path d="M967.3,531.5 C955,539 955,556 967.3,563.5" fill="none" stroke="#25262e" stroke-width="0.8"/>
<rect x="871" y="476" width="31" height="38" fill="#cbc2b7" stroke="#25262e" stroke-width="0.8"/>
<rect x="1076" y="490" width="31" height="38.5" fill="#cbc2b7" stroke="#25262e" stroke-width="0.8"/>
<rect x="935.4" y="472" width="31.9" height="5.5" fill="#e8862e" stroke="#25262e" stroke-width="0.8"/>
<rect x="935.4" y="503" width="31.9" height="5.5" fill="#e8862e" stroke="#25262e" stroke-width="0.8"/>
<polygon points="938.7,477.5 1002.5,477.5 1002.5,464 1021,464 1021,509 1002.5,509 1002.5,503 938.7,503" fill="#b1a89e" stroke="#25262e" stroke-width="0.8" stroke-linejoin="round"/>
<rect x="895" y="289.3" width="29.4" height="16.2" fill="#cbc2b7" stroke="#25262e" stroke-width="0.8"/>
<rect x="895" y="355.5" width="29.4" height="30" fill="#cbc2b7" stroke="#25262e" stroke-width="0.8"/>
<rect x="895" y="307" width="33.8" height="13" fill="#b3b8ce" stroke="#25262e" stroke-width="0.8"/>
<rect x="895" y="341" width="33.8" height="14.5" fill="#b3b8ce" stroke="#25262e" stroke-width="0.8"/>
<polygon points="968,307 993,307 995,310 995,320 968,320" fill="#b1a89e" stroke="#25262e" stroke-width="0.8" stroke-linejoin="round"/>
<polygon points="968,341 995,341 995,349 993,352 968,352" fill="#b1a89e" stroke="#25262e" stroke-width="0.8" stroke-linejoin="round"/>
<polygon points="893,320 1009.4,320 1009.4,341 893,341" fill="#b1a89e" stroke="#25262e" stroke-width="0.8" stroke-linejoin="round"/>
<path d="M893,304 C872,306 864,320 864,330.5 C864,341 872,355 893,357 Z" fill="#a69e95" stroke="#25262e" stroke-width="0.7"/>
<polygon points="882.5,304 893,318 893,343 882.5,357" fill="#9c948b" stroke="none" stroke-width="0.8" stroke-linejoin="round"/>
<polygon points="874,325 879,321 886,322 890,330 886,338 879,339 874,335" fill="#8a847d" stroke="#25262e" stroke-width="0.8" stroke-linejoin="round"/>
<polygon points="874,325 879,321 881,336 874,335" fill="#e4ded5" stroke="#25262e" stroke-width="0.8" stroke-linejoin="round"/>
<path d="M1024.4,432 C1012,436 1006,450 1008,466 C1010,478 1016,486 1024.4,490 Z" fill="#8e8880" stroke="#25262e" stroke-width="0.7"/>
<rect x="1113" y="442.3" width="4" height="35" fill="#1f539a" stroke="none" stroke-width="0.8"/>
<rect x="1076" y="437" width="31" height="5.5" fill="#e8862e" stroke="#25262e" stroke-width="0.8"/>
<rect x="1076" y="477.3" width="31" height="5.7" fill="#e8862e" stroke="#25262e" stroke-width="0.8"/>
<polygon points="1024.4,432 1050,432 1050,442.3 1113,442.3 1113,477.3 1050,477.3 1050,490 1024.4,490" fill="#b1a89e" stroke="#25262e" stroke-width="0.8" stroke-linejoin="round"/>
<polygon points="1019,452 1027,447 1037,450 1041,460 1036,471 1026,473 1022,468" fill="#9a938b" stroke="#25262e" stroke-width="0.8" stroke-linejoin="round"/>
<polygon points="1019,452 1027,447 1030,466 1022,468" fill="#e4ded5" stroke="#25262e" stroke-width="0.8" stroke-linejoin="round"/></g>
<rect x="885" y="575" width="225.5" height="6" fill="#b3b8ce"/>
<path d="M966.9,570 V586" stroke="#25262e" stroke-width="0.9"/>
<ellipse cx="1161" cy="578" rx="50.4" ry="67.3" fill="#fff" stroke="#25262e" stroke-width="0.8"/>
<rect x="1155" y="440" width="60" height="280" fill="#fff"/>
</g></svg>
<svg class="a" style="left:922.0px;top:106.0px" width="16" height="16" viewBox="0 0 16 16"><circle cx="9.5" cy="6" r="4.5" fill="#fff" stroke="#777" stroke-width="1.1"/><circle cx="9.5" cy="6" r="1.8" fill="none" stroke="#999" stroke-width="0.9" stroke-dasharray="1.4 1"/><path d="M6 9.5 L1.5 14" stroke="#7fb2d6" stroke-width="2.6" stroke-linecap="round"/></svg>
<svg class="a" style="left:942.0px;top:106.0px" width="16" height="16" viewBox="0 0 16 16"><circle cx="9.5" cy="6" r="4.5" fill="#fff" stroke="#888" stroke-width="1.1"/><path d="M6 9.5 L1.5 14" stroke="#7fb2d6" stroke-width="2.6" stroke-linecap="round"/><path d="M6 1 H14.5 V9" fill="none" stroke="#555" stroke-width="0.9" stroke-dasharray="1.6 1.2"/></svg>
<svg class="a" style="left:961.0px;top:106.0px" width="16" height="16" viewBox="0 0 16 16"><path d="M2 11 L10 2.5 L13.5 5.5 L5.5 14 Z" fill="#ddd" stroke="#999" stroke-width="0.9"/><path d="M14.5 10.5 H8.5 M10.8 8.2 L8.2 10.5 L10.8 12.8" fill="none" stroke="#4a90c8" stroke-width="1.5"/></svg>
<div class="a" style="left:979px;top:104.5px;width:19px;height:19px;background:#b4b4b4;border:1px solid #8f8f8f;box-sizing:border-box"></div>
<svg class="a" style="left:981.0px;top:106.5px" width="15" height="15" viewBox="0 0 16 16"><path d="M2 5.5 L6 3.5 V13 L2 15 Z" fill="#2f7fb0" stroke="#164a6c" stroke-width="0.9"/><path d="M6 3.5 H10 V13 H6" fill="#e8eef2" stroke="#555" stroke-width="0.8"/><path d="M10 3.5 L14.5 2 V12 L10 13 Z" fill="#2f7fb0" stroke="#164a6c" stroke-width="0.9"/></svg>
<svg class="a" style="left:1000.0px;top:106.0px" width="16" height="16" viewBox="0 0 16 16"><path d="M2 5 H10.5 V14 H2 Z" fill="#8fc8e8" stroke="#2a6a96" stroke-width="0.9"/><path d="M2 5 L5.5 1.5 H14 L10.5 5 M14 1.5 V10.5 L10.5 14" fill="#fff" stroke="#555" stroke-width="0.9"/></svg>
<div class="dd" style="left:1019.5px;top:112.5px;border-top-color:#888"></div>
<svg class="a" style="left:1030.0px;top:106.0px" width="16" height="16" viewBox="0 0 16 16"><path d="M2 4 L8 6 V15 L2 12.5 Z" fill="#6fb4dc" stroke="#2a6a96" stroke-width="0.8"/><path d="M8 6 L14 4 V12.5 L8 15 Z" fill="#e4eef4" stroke="#2a6a96" stroke-width="0.8"/><path d="M2 4 L8 2 L14 4 L8 6 Z" fill="#b8dcf0" stroke="#2a6a96" stroke-width="0.8"/></svg>
<div class="dd" style="left:1049.5px;top:112.5px;border-top-color:#888"></div>
<svg class="a" style="left:1060.0px;top:106.0px" width="16" height="16" viewBox="0 0 16 16"><path d="M1 8 C4 3.5 12 3.5 15 8 C12 12.5 4 12.5 1 8 Z" fill="#eee" stroke="#aaa" stroke-width="0.9"/><circle cx="8" cy="8" r="2.8" fill="#666"/><path d="M8 2 V14" stroke="#555" stroke-width="0.9"/></svg>
<div class="dd" style="left:1079.5px;top:112.5px;border-top-color:#888"></div>
<svg class="a" style="left:1090.0px;top:106.0px" width="16" height="16" viewBox="0 0 16 16"><circle cx="7" cy="7" r="5.5" fill="#ececec" stroke="#dcdcdc"/><path d="M7 12 L12 14.5 L14 10" fill="#ececec" stroke="#dcdcdc"/></svg>
<svg class="a" style="left:1109.0px;top:106.0px" width="16" height="16" viewBox="0 0 16 16"><circle cx="8" cy="6" r="5.2" fill="#e8c020"/><path d="M8 6 L8 0.8 A5.2 5.2 0 0 0 2.8 6 Z" fill="#3a7fd0"/><path d="M8 6 L8 0.8 A5.2 5.2 0 0 1 13.2 6 Z" fill="#d83a2a"/><path d="M8 6 H2.8 A5.2 5.2 0 0 0 8 11.2 Z" fill="#3a9a3a"/><path d="M1.5 9.5 L5 8 L8 10.5 L11 8 L14.5 9.5 V15 H1.5 Z" fill="#444"/><path d="M3 12 H5 V14 H3 Z M7 12 H9 V14 H7 Z M11 12 H13 V14 H11 Z" fill="#ddd"/></svg>
<div class="dd" style="left:1128.5px;top:112.5px;border-top-color:#888"></div>
<svg class="a" style="left:1139.0px;top:106.0px" width="16" height="16" viewBox="0 0 16 16"><rect x="1.5" y="2.5" width="13" height="8.5" fill="#e4e4e4" stroke="#666" stroke-width="1.1"/><path d="M8 11 V13.5 M5 14 H11" stroke="#666" stroke-width="1.2"/></svg>
<div class="dd" style="left:1158.5px;top:112.5px;border-top-color:#888"></div>
<svg class="a" style="left:1822px;top:109px" width="10" height="10" viewBox="0 0 10 10"><rect x="0.6" y="0.6" width="8.8" height="8.8" fill="none" stroke="#bdbdbd"/><path d="M4.8 3 L2.6 5 L4.8 7 Z" fill="#999"/></svg>
<svg class="a" style="left:1842px;top:109px" width="10" height="10" viewBox="0 0 10 10"><rect x="0.6" y="0.6" width="8.8" height="8.8" fill="none" stroke="#bdbdbd"/><path d="M5.2 3 L7.4 5 L5.2 7 Z" fill="#999"/></svg>
<div class="a" style="left:1862px;top:117px;width:8px;height:1.2px;background:#aaa"></div>
<svg class="a" style="left:1880px;top:108.5px" width="12" height="11" viewBox="0 0 12 11"><path d="M3.5 3 V1 H11 V6.5 H8.5" fill="none" stroke="#aaa" stroke-width="1"/><rect x="1" y="4" width="7.5" height="6" fill="none" stroke="#aaa" stroke-width="1"/></svg>
<svg class="a" style="left:1900px;top:109.5px" width="9" height="9" viewBox="0 0 9 9"><path d="M1 1 L8 8 M8 1 L1 8" stroke="#aaa" stroke-width="1.1"/></svg>
<div class="a" style="left:1900px;top:141px;width:20px;height:126px;background:#d2d2d2;border-left:1px solid #b0b0b0;box-sizing:border-box"></div>
<div class="a" style="left:1901px;top:159px;width:19px;height:17.5px;background:#fafafa"></div>
<div class="a" style="left:1900px;top:141px;width:20px;height:1px;background:#b0b0b0"></div>
<div class="a" style="left:1900px;top:158.5px;width:20px;height:1px;background:#b0b0b0"></div>
<div class="a" style="left:1900px;top:176.5px;width:20px;height:1px;background:#b0b0b0"></div>
<div class="a" style="left:1900px;top:194.5px;width:20px;height:1px;background:#b0b0b0"></div>
<div class="a" style="left:1900px;top:212.5px;width:20px;height:1px;background:#b0b0b0"></div>
<div class="a" style="left:1900px;top:230.5px;width:20px;height:1px;background:#b0b0b0"></div>
<div class="a" style="left:1900px;top:248.5px;width:20px;height:1px;background:#b0b0b0"></div>
<div class="a" style="left:1900px;top:266.5px;width:20px;height:1px;background:#b0b0b0"></div>
<svg class="a" style="left:1902.5px;top:142.5px" width="15" height="15" viewBox="0 0 16 16"><circle cx="8" cy="8" r="7.5" fill="#1f5f8c"/><circle cx="8" cy="8" r="5" fill="none" stroke="#6aa6cc" stroke-width="0.8"/><path d="M6.5 5.5 L10.5 8 L6.5 10.5 Z" fill="none" stroke="#9cc4de" stroke-width="0.8"/></svg>
<svg class="a" style="left:1902.5px;top:160.5px" width="15" height="15" viewBox="0 0 16 16"><path d="M3 4 L6 2.5 V13 L3 14.5 Z M6.5 3.5 L9.5 2 V12.5 L6.5 14 Z M10 3 L13 1.5 V12 L10 13.5 Z" fill="#fff" stroke="#444" stroke-width="0.9"/></svg>
<svg class="a" style="left:1902.5px;top:178.5px" width="15" height="15" viewBox="0 0 16 16"><rect x="1.5" y="2.5" width="13" height="11" fill="#f2c029" stroke="#6b5510" stroke-width="0.9"/><path d="M4 4.5 H9 L7.5 8 L9.5 12 H3.5 L5.5 8 Z" fill="#fff" stroke="#6b5510" stroke-width="0.7"/><rect x="11" y="7" width="2.4" height="5.5" fill="#eee" stroke="#555" stroke-width="0.6"/></svg>
<svg class="a" style="left:1902.5px;top:196.0px" width="15" height="15" viewBox="0 0 16 16"><circle cx="8" cy="8" r="6.5" fill="#e8c020"/><path d="M8 8 L8 1.5 A6.5 6.5 0 0 0 1.5 8 Z" fill="#3a7fd0"/><path d="M8 8 L8 1.5 A6.5 6.5 0 0 1 14.5 8 Z" fill="#d83a2a"/><path d="M8 8 H1.5 A6.5 6.5 0 0 0 8 14.5 Z" fill="#3a9a3a"/></svg>
<svg class="a" style="left:1902.5px;top:214.5px" width="15" height="15" viewBox="0 0 16 16"><path d="M1.5 3 H6 L7.5 4.5 H12.5 V6.5" fill="#fff" stroke="#555" stroke-width="1"/><path d="M1.5 13.5 L4.5 6.5 H15.5 L12.5 13.5 Z" fill="#fff" stroke="#555" stroke-width="1"/></svg>
<svg class="a" style="left:1902.5px;top:232.5px" width="15" height="15" viewBox="0 0 16 16"><rect x="1.5" y="1.5" width="13" height="13" fill="#fff" stroke="#2a6a96" stroke-width="1"/><rect x="1.5" y="1.5" width="13" height="2.6" fill="#3a86b8"/><path d="M3 6.5 H6 M3 9 H6 M3 11.5 H6" stroke="#2a6a96" stroke-width="1.6"/><path d="M7.5 6.5 H13.5 M7.5 9 H13.5 M7.5 11.5 H13.5" stroke="#666" stroke-width="0.9"/></svg>
<svg class="a" style="left:1902.5px;top:250.5px" width="15" height="15" viewBox="0 0 16 16"><path d="M3.5 8 V14.5 H12.5 V8" fill="#fff" stroke="#444" stroke-width="1.1"/><path d="M1 8.5 L8 1.8 L15 8.5" fill="none" stroke="#2f6f9a" stroke-width="2"/><rect x="6.8" y="10.5" width="2.6" height="4" fill="none" stroke="#444" stroke-width="0.9"/></svg>
<div class="a" style="left:1918.6px;top:102px;width:1.2px;height:937px;background:#c9c9c9"></div>
<svg class="a" style="left:1476px;top:476px" width="20" height="24" viewBox="0 0 20 24"><path d="M10 1 L7.5 4.5 H12.5 Z M10 23 L7.5 19.5 H12.5 Z M10 4 V20" stroke="#222" stroke-width="1.3" fill="#222"/><path d="M14.5 9 C8 6.5 2 8.5 2 11.5 C2 14.5 8 16.5 15.5 14" fill="none" stroke="#2a5fb0" stroke-width="2.2"/><path d="M14 11.5 L18.8 13.2 L15.5 16.5 Z" fill="#2a5fb0"/></svg>
<svg class="a" style="left:178px;top:960px" width="50" height="42" viewBox="0 0 50 42"><path d="M25 31 V8" stroke="#3a9a6a" stroke-width="1.6"/><path d="M25 3 L22.5 10 H27.5 Z" fill="#3a9a6a"/><path d="M25 35 L40 36" stroke="#c03030" stroke-width="2"/><path d="M43 36 L37 33.5 V38.5 Z" fill="#c03030"/><path d="M25 35 L8 36.5" stroke="#2030b0" stroke-width="2.4"/><path d="M4 36.8 L11 33.5 V39.5 Z" fill="#2030b0"/><text x="44" y="33" font-size="5" fill="#c03030" font-family="Liberation Sans,sans-serif">X</text><text x="1" y="33" font-size="5" fill="#2030b0" font-family="Liberation Sans,sans-serif">Z</text></svg>
<div class="a" style="left:0;top:1038.5px;width:1920px;height:1.2px;background:#b5b5b5"></div>
<div class="a" style="left:0;top:1039.5px;width:1917px;height:11px;background:#f4f4f4"></div>
<div class="a" style="left:0;top:1039.5px;width:50px;height:11px;background:#d6d6d6"></div>
<div class="a" style="left:6px;top:1042.5px;width:0;height:0;border-top:2.6px solid transparent;border-bottom:2.6px solid transparent;border-right:4px solid #bdbdbd"></div>
<div class="a" style="left:18px;top:1042.5px;width:0;height:0;border-top:2.6px solid transparent;border-bottom:2.6px solid transparent;border-right:4px solid #bdbdbd"></div>
<div class="a" style="left:30px;top:1042.5px;width:0;height:0;border-top:2.6px solid transparent;border-bottom:2.6px solid transparent;border-left:4px solid #bdbdbd"></div>
<div class="a" style="left:42px;top:1042.5px;width:0;height:0;border-top:2.6px solid transparent;border-bottom:2.6px solid transparent;border-left:4px solid #bdbdbd"></div>
<div class="a" style="left:50px;top:1039.5px;width:42px;height:11px;background:#fcfcfc"></div>
<div class="t" style="left:59px;top:1039.5px;font-weight:bold;font-size:9px"><span style="letter-spacing:-0.15px">Model</span></div>
<div class="a" style="left:92px;top:1039.5px;width:81px;height:11px;background:#d2d2d2;border:1px solid #b4b4b4;border-top:none;box-sizing:border-box"></div>
<div class="t" style="left:99px;top:1039.5px;font-size:9px"><span style="letter-spacing:-0.11px">Motion Study 1</span></div>
<div class="a" style="left:0;top:1050.5px;width:1920px;height:1.2px;background:#b5b5b5"></div>
<div class="a" style="left:0;top:1051.5px;width:1920px;height:12.5px;background:#f6f6f6"></div>
<div class="a" style="left:0;top:1064px;width:1920px;height:16px;background:#ebe9ec"></div>
<div class="t" style="left:1px;top:1053.7px;font-size:9px"><span style="letter-spacing:-0.45px">SOLIDWORKS Premium 2022 SP5.0</span></div>
<div class="t" style="left:1683px;top:1053.7px;font-size:9px"><span style="letter-spacing:-0.08px">Under Defined</span></div>
<div class="a" style="left:1768px;top:1052px;width:1px;height:12px;background:#dcdcdc"></div>
<div class="t" style="left:1840px;top:1053.7px;font-size:9px"><span style="letter-spacing:-1.37px">MMGS</span></div>
<div class="a" style="left:1881.5px;top:1057px;width:0;height:0;border-left:2.2px solid transparent;border-right:2.2px solid transparent;border-bottom:3px solid #444"></div>
<svg class="a" style="left:1905px;top:1052.5px" width="13" height="11" viewBox="0 0 13 11"><path d="M1 4 L5 1 L12 3.5 V7 L8 10 L1 7 Z" fill="#fff" stroke="#555" stroke-width="1"/><path d="M3.5 4 L6 2.5 L9.5 4 L7 5.6 Z" fill="none" stroke="#555" stroke-width="0.8"/></svg>
<svg class="a" style="left:0;top:940px;pointer-events:none" width="340" height="140" viewBox="0 940 340 140">
<defs>
<linearGradient id="wmG" x1="0" y1="0" x2="0" y2="1"><stop offset="0" stop-color="#4d9dd2"/><stop offset="0.45" stop-color="#9ccbe9"/><stop offset="0.55" stop-color="#6fb2de"/><stop offset="1" stop-color="#3f8ec6"/></linearGradient>
<linearGradient id="wmL" x1="0" y1="0" x2="1" y2="0"><stop offset="0" stop-color="#3f93c8"/><stop offset="0.5" stop-color="#7fc0e6"/><stop offset="1" stop-color="#3f93c8"/></linearGradient>
</defs>
<g opacity="0.8">
<rect x="13.4" y="949.5" width="25.3" height="94.5" fill="url(#wmL)"/>
<path d="M38.7,949.5 L47,949.5 L64,977 L83,949.5 L91,949.5 L91,962 L70,994 L58,994 L38.7,962 Z" fill="#7ab4e0" opacity="0.85"/>
<rect x="58" y="975" width="13" height="16" rx="1.5" fill="#55595e"/>
<rect x="91" y="949.5" width="27.5" height="94.5" fill="#5aa9da"/>
<g font-family="Liberation Mono,monospace" font-size="5.4" fill="#1d3f5c"><text x="93" y="953.0" textLength="24" lengthAdjust="spacingAndGlyphs">01011000</text><text x="93" y="958.4" textLength="24" lengthAdjust="spacingAndGlyphs">01100110</text><text x="93" y="963.8" textLength="24" lengthAdjust="spacingAndGlyphs">01001100</text><text x="93" y="969.2" textLength="24" lengthAdjust="spacingAndGlyphs">11101100</text><text x="93" y="974.6" textLength="24" lengthAdjust="spacingAndGlyphs">01101011</text><text x="93" y="980.0" textLength="24" lengthAdjust="spacingAndGlyphs">01111100</text><text x="93" y="985.4" textLength="24" lengthAdjust="spacingAndGlyphs">11000111</text><text x="93" y="990.8" textLength="24" lengthAdjust="spacingAndGlyphs">10001011</text><text x="93" y="996.2" textLength="24" lengthAdjust="spacingAndGlyphs">01110100</text><text x="93" y="1001.6" textLength="24" lengthAdjust="spacingAndGlyphs">01001011</text><text x="93" y="1007.0" textLength="24" lengthAdjust="spacingAndGlyphs">00101101</text><text x="93" y="1012.4" textLength="24" lengthAdjust="spacingAndGlyphs">11010101</text><text x="93" y="1017.8" textLength="24" lengthAdjust="spacingAndGlyphs">10110101</text><text x="93" y="1023.2" textLength="24" lengthAdjust="spacingAndGlyphs">01011101</text><text x="93" y="1028.6" textLength="24" lengthAdjust="spacingAndGlyphs">01000000</text><text x="93" y="1034.0" textLength="24" lengthAdjust="spacingAndGlyphs">00101001</text><text x="93" y="1039.4" textLength="24" lengthAdjust="spacingAndGlyphs">10100111</text></g>
<rect x="20.5" y="962" width="10" height="22" rx="2" fill="#d8e6ee" stroke="#6f8a9a" stroke-width="0.8"/>
<rect x="22.5" y="972" width="6" height="10" fill="#e8d46a"/>
<circle cx="25.8" cy="996" r="9.5" fill="#e0e0d8" stroke="#8a9aa5" stroke-width="1"/>
<circle cx="25.8" cy="996" r="3" fill="#7fa0b8"/>
<circle cx="26" cy="1022" r="7.5" fill="#9fb4c2" stroke="#66808f" stroke-width="1.2"/>
<circle cx="26" cy="1022" r="3.4" fill="#d4d4cc"/>
<path d="M17.5,1000 L19.5,1024 M34,1000 L32.5,1024" stroke="#4a5f6c" stroke-width="1"/>
<circle cx="20.5" cy="1034.5" r="2.6" fill="none" stroke="#8fa4b2" stroke-width="1"/>
</g>
<g font-family="Liberation Sans,sans-serif" font-weight="bold" fill="#2f78ad" stroke="#2f78ad" stroke-width="3" opacity="0.55" transform="translate(1.2,1.2)"><text x="161.5" y="988.5" font-size="44" textLength="52" lengthAdjust="spacingAndGlyphs">How</text><text x="232.5" y="988.5" font-size="44" textLength="33" lengthAdjust="spacingAndGlyphs">To</text><text x="122.5" y="1044.5" font-size="45" textLength="192" lengthAdjust="spacingAndGlyphs">ECHATRONICS</text></g>
<g font-family="Liberation Sans,sans-serif" font-weight="bold" fill="url(#wmG)" stroke="url(#wmG)" stroke-width="3" stroke-linejoin="miter" opacity="0.88">
<text x="161.5" y="988.5" font-size="44" textLength="52" lengthAdjust="spacingAndGlyphs">How</text>
<text x="232.5" y="988.5" font-size="44" textLength="33" lengthAdjust="spacingAndGlyphs">To</text>
<text x="122.5" y="1044.5" font-size="45" textLength="192" lengthAdjust="spacingAndGlyphs">ECHATRONICS</text>
</g>
<text x="14.5" y="1068" font-family="Liberation Mono,monospace" font-size="18.6" fill="#2a2a2a" stroke="#2a2a2a" stroke-width="0.45" opacity="0.8" textLength="305" lengthAdjust="spacing">www.HowToMechatronics.com</text>
</svg>
</div>
</body></html>
